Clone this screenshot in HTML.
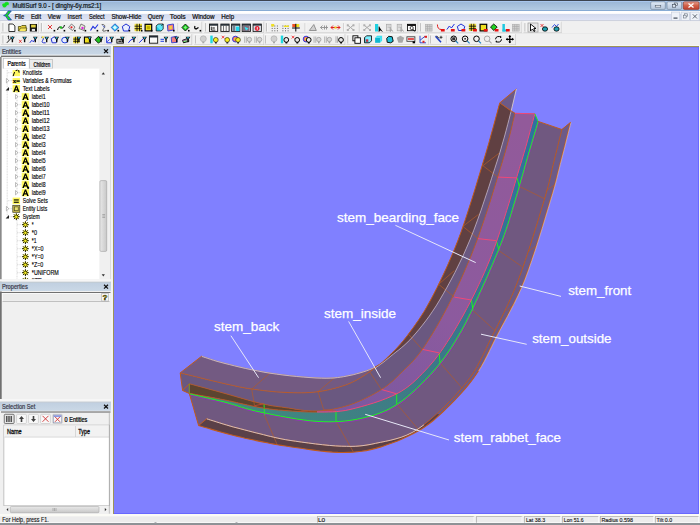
<!DOCTYPE html>
<html><head><meta charset="utf-8"><style>
html,body{margin:0;padding:0;}
body{width:700px;height:525px;overflow:hidden;position:relative;background:#f0f0f0;font-family:"Liberation Sans",sans-serif;}
svg{position:absolute;left:0;top:0;}
text{font-family:"Liberation Sans",sans-serif;}
</style></head><body>
<svg width="700" height="525" viewBox="0 0 700 525">
<rect x="0" y="0" width="700" height="525" fill="#f0f0f0"/>
<defs><linearGradient id="tg" x1="0" y1="0" x2="0" y2="1"><stop offset="0" stop-color="#96b3d3"/><stop offset="1" stop-color="#b6cde5"/></linearGradient><linearGradient id="mg" x1="0" y1="0" x2="0" y2="1"><stop offset="0" stop-color="#ffffff"/><stop offset="0.25" stop-color="#ffffff"/><stop offset="0.35" stop-color="#d4dbee"/><stop offset="1" stop-color="#e0e5f6"/></linearGradient><linearGradient id="hg" x1="0" y1="0" x2="0" y2="1"><stop offset="0" stop-color="#c0cfe0"/><stop offset="1" stop-color="#cad8e6"/></linearGradient><linearGradient id="cg" x1="0" y1="0" x2="0" y2="1"><stop offset="0" stop-color="#e8a090"/><stop offset="0.5" stop-color="#d06048"/><stop offset="1" stop-color="#c04030"/></linearGradient><linearGradient id="bg" x1="0" y1="0" x2="0" y2="1"><stop offset="0" stop-color="#e4ecf6"/><stop offset="0.5" stop-color="#c8d6e8"/><stop offset="1" stop-color="#b8c8dc"/></linearGradient><linearGradient id="sg" x1="0" y1="0" x2="1" y2="0"><stop offset="0" stop-color="#e8e8e8"/><stop offset="1" stop-color="#c8c8c8"/></linearGradient><linearGradient id="sgv" x1="0" y1="0" x2="0" y2="1"><stop offset="0" stop-color="#e8e8e8"/><stop offset="1" stop-color="#c8c8c8"/></linearGradient></defs>
<rect x="0" y="0" width="700" height="11" fill="url(#tg)" />
<rect x="0" y="0" width="700" height="1" fill="#3c4450" />
<rect x="0" y="1" width="700" height="1" fill="#a8c6ee" />
<rect x="0" y="10" width="700" height="1" fill="#88acd4" />
<path d="M2,4.5 Q2.5,2.8 4.5,3 Q5.5,1.2 7.5,1.8 Q9.5,2 9.2,4 Q9,5.8 7,5.6 Q6.5,7.8 4.2,7.8 Q2,7.6 2.5,6 Q1.6,5.4 2,4.5 Z" fill="#10e020" stroke="#e0b0e8" stroke-width="0.4"/>
<text x="12.6" y="8.2" font-size="6.6" fill="#101820" stroke="#101820" stroke-width="0.22" font-weight="normal" textLength="88.6" lengthAdjust="spacingAndGlyphs">MultiSurf 9.0 - [ dinghy-6y.ms2:1]</text>
<rect x="650.7" y="1.8" width="14.6" height="7.6" fill="url(#bg)" stroke="#6a7c94" stroke-width="0.6" rx="1.2"/>
<rect x="655.2" y="5.3" width="5.6" height="1.8" fill="#f0f4f8" stroke="#404a58" stroke-width="0.5" />
<rect x="667" y="1.8" width="14.6" height="7.6" fill="url(#bg)" stroke="#6a7c94" stroke-width="0.6" rx="1.2"/>
<rect x="674.2" y="3.0" width="3.4" height="2.6" fill="#dde6f0" stroke="#404a58" stroke-width="0.6" />
<rect x="672.3" y="4.6" width="3.4" height="2.6" fill="#dde6f0" stroke="#404a58" stroke-width="0.6" />
<rect x="683.3" y="1.8" width="15.8" height="7.6" fill="url(#cg)" stroke="#8a3020" stroke-width="0.6" rx="1.2"/>
<path d="M688.5,3.5 L693.5,7.5 M693.5,3.5 L688.5,7.5" stroke="#ffffff" stroke-width="1.3"/>
<rect x="0" y="11" width="700" height="9.5" fill="url(#mg)" />
<rect x="0" y="20.3" width="700" height="0.8" fill="#c4c8d4" />
<path d="M11.3,11 L7.8,15.4 L11.5,19.9 L8.2,20 L5.6,16.2 L3.6,15.5 L5.6,14.6 L8.2,10.9 Z" fill="#10e020" stroke="#2030c0" stroke-width="0.7"/>
<circle cx="7.2" cy="13.8" r="0.5" fill="#a040a0"/><circle cx="7.4" cy="17.2" r="0.5" fill="#a040a0"/>
<text x="14.700000000000001" y="18.6" font-size="6.5" fill="#101010" stroke="#101010" stroke-width="0.22" font-weight="normal" textLength="9.5" lengthAdjust="spacingAndGlyphs">File</text>
<text x="31.0" y="18.6" font-size="6.5" fill="#101010" stroke="#101010" stroke-width="0.22" font-weight="normal" textLength="10.0" lengthAdjust="spacingAndGlyphs">Edit</text>
<text x="47.699999999999996" y="18.6" font-size="6.5" fill="#101010" stroke="#101010" stroke-width="0.22" font-weight="normal" textLength="12.8" lengthAdjust="spacingAndGlyphs">View</text>
<text x="67.6" y="18.6" font-size="6.5" fill="#101010" stroke="#101010" stroke-width="0.22" font-weight="normal" textLength="14.200000000000001" lengthAdjust="spacingAndGlyphs">Insert</text>
<text x="88.89999999999999" y="18.6" font-size="6.5" fill="#101010" stroke="#101010" stroke-width="0.22" font-weight="normal" textLength="15.600000000000001" lengthAdjust="spacingAndGlyphs">Select</text>
<text x="111.39999999999999" y="18.6" font-size="6.5" fill="#101010" stroke="#101010" stroke-width="0.22" font-weight="normal" textLength="29.900000000000002" lengthAdjust="spacingAndGlyphs">Show-Hide</text>
<text x="147.8" y="18.6" font-size="6.5" fill="#101010" stroke="#101010" stroke-width="0.22" font-weight="normal" textLength="16.0" lengthAdjust="spacingAndGlyphs">Query</text>
<text x="169.8" y="18.6" font-size="6.5" fill="#101010" stroke="#101010" stroke-width="0.22" font-weight="normal" textLength="15.8" lengthAdjust="spacingAndGlyphs">Tools</text>
<text x="192.3" y="18.6" font-size="6.5" fill="#101010" stroke="#101010" stroke-width="0.22" font-weight="normal" textLength="22.3" lengthAdjust="spacingAndGlyphs">Window</text>
<text x="221.3" y="18.6" font-size="6.5" fill="#101010" stroke="#101010" stroke-width="0.22" font-weight="normal" textLength="12.8" lengthAdjust="spacingAndGlyphs">Help</text>
<rect x="671.3" y="12" width="8.5" height="8.6" fill="#eef2f8" stroke="#b8c0d0" stroke-width="0.5" />
<rect x="681.1" y="12" width="8.5" height="8.6" fill="#eef2f8" stroke="#b8c0d0" stroke-width="0.5" />
<rect x="690.6" y="12" width="8.5" height="8.6" fill="#eef2f8" stroke="#b8c0d0" stroke-width="0.5" />
<rect x="673.5" y="17.5" width="4" height="1.2" fill="#404a58" />
<rect x="684.6" y="13.8" width="2.8" height="2.8" fill="none" stroke="#6a7480" stroke-width="0.6" />
<rect x="683.3" y="15.2" width="2.8" height="2.8" fill="#eef2f8" stroke="#6a7480" stroke-width="0.6" />
<path d="M692.8,14.3 L697,18.5 M697,14.3 L692.8,18.5" stroke="#505a66" stroke-width="0.9"/>
<rect x="0" y="21.1" width="700" height="25.2" fill="#f0f0f0" />
<rect x="1" y="21.6" width="37.8" height="11.399999999999999" fill="#f0f0f0" /><line x1="1" y1="21.900000000000002" x2="38.8" y2="21.900000000000002" stroke="#ffffff" stroke-width="0.7" /><line x1="1" y1="32.7" x2="38.8" y2="32.7" stroke="#c8c8c8" stroke-width="0.7" /><line x1="38.5" y1="21.6" x2="38.5" y2="33.0" stroke="#c8c8c8" stroke-width="0.6" />
<rect x="40" y="21.6" width="162" height="11.399999999999999" fill="#f0f0f0" /><line x1="40" y1="21.900000000000002" x2="202" y2="21.900000000000002" stroke="#ffffff" stroke-width="0.7" /><line x1="40" y1="32.7" x2="202" y2="32.7" stroke="#c8c8c8" stroke-width="0.7" /><line x1="201.7" y1="21.6" x2="201.7" y2="33.0" stroke="#c8c8c8" stroke-width="0.6" />
<rect x="204.2" y="21.6" width="59.80000000000001" height="11.399999999999999" fill="#f0f0f0" /><line x1="204.2" y1="21.900000000000002" x2="264" y2="21.900000000000002" stroke="#ffffff" stroke-width="0.7" /><line x1="204.2" y1="32.7" x2="264" y2="32.7" stroke="#c8c8c8" stroke-width="0.7" /><line x1="263.7" y1="21.6" x2="263.7" y2="33.0" stroke="#c8c8c8" stroke-width="0.6" />
<rect x="265.5" y="21.6" width="152.5" height="11.399999999999999" fill="#f0f0f0" /><line x1="265.5" y1="21.900000000000002" x2="418" y2="21.900000000000002" stroke="#ffffff" stroke-width="0.7" /><line x1="265.5" y1="32.7" x2="418" y2="32.7" stroke="#c8c8c8" stroke-width="0.7" /><line x1="417.7" y1="21.6" x2="417.7" y2="33.0" stroke="#c8c8c8" stroke-width="0.6" />
<rect x="419.5" y="21.6" width="102.10000000000002" height="11.399999999999999" fill="#f0f0f0" /><line x1="419.5" y1="21.900000000000002" x2="521.6" y2="21.900000000000002" stroke="#ffffff" stroke-width="0.7" /><line x1="419.5" y1="32.7" x2="521.6" y2="32.7" stroke="#c8c8c8" stroke-width="0.7" /><line x1="521.3000000000001" y1="21.6" x2="521.3000000000001" y2="33.0" stroke="#c8c8c8" stroke-width="0.6" />
<rect x="523.5" y="21.6" width="38.10000000000002" height="11.399999999999999" fill="#f0f0f0" /><line x1="523.5" y1="21.900000000000002" x2="561.6" y2="21.900000000000002" stroke="#ffffff" stroke-width="0.7" /><line x1="523.5" y1="32.7" x2="561.6" y2="32.7" stroke="#c8c8c8" stroke-width="0.7" /><line x1="561.3000000000001" y1="21.6" x2="561.3000000000001" y2="33.0" stroke="#c8c8c8" stroke-width="0.6" />
<rect x="1" y="34.0" width="191" height="11.0" fill="#f0f0f0" /><line x1="1" y1="34.3" x2="192" y2="34.3" stroke="#ffffff" stroke-width="0.7" /><line x1="1" y1="44.7" x2="192" y2="44.7" stroke="#c8c8c8" stroke-width="0.7" /><line x1="191.7" y1="34.0" x2="191.7" y2="45.0" stroke="#c8c8c8" stroke-width="0.6" />
<rect x="194.2" y="34.0" width="69.80000000000001" height="11.0" fill="#f0f0f0" /><line x1="194.2" y1="34.3" x2="264" y2="34.3" stroke="#ffffff" stroke-width="0.7" /><line x1="194.2" y1="44.7" x2="264" y2="44.7" stroke="#c8c8c8" stroke-width="0.7" /><line x1="263.7" y1="34.0" x2="263.7" y2="45.0" stroke="#c8c8c8" stroke-width="0.6" />
<rect x="264.5" y="34.0" width="80.69999999999999" height="11.0" fill="#f0f0f0" /><line x1="264.5" y1="34.3" x2="345.2" y2="34.3" stroke="#ffffff" stroke-width="0.7" /><line x1="264.5" y1="44.7" x2="345.2" y2="44.7" stroke="#c8c8c8" stroke-width="0.7" /><line x1="344.9" y1="34.0" x2="344.9" y2="45.0" stroke="#c8c8c8" stroke-width="0.6" />
<rect x="346.5" y="34.0" width="82.30000000000001" height="11.0" fill="#f0f0f0" /><line x1="346.5" y1="34.3" x2="428.8" y2="34.3" stroke="#ffffff" stroke-width="0.7" /><line x1="346.5" y1="44.7" x2="428.8" y2="44.7" stroke="#c8c8c8" stroke-width="0.7" /><line x1="428.5" y1="34.0" x2="428.5" y2="45.0" stroke="#c8c8c8" stroke-width="0.6" />
<rect x="429.5" y="34.0" width="86.29999999999995" height="11.0" fill="#f0f0f0" /><line x1="429.5" y1="34.3" x2="515.8" y2="34.3" stroke="#ffffff" stroke-width="0.7" /><line x1="429.5" y1="44.7" x2="515.8" y2="44.7" stroke="#c8c8c8" stroke-width="0.7" /><line x1="515.5" y1="34.0" x2="515.5" y2="45.0" stroke="#c8c8c8" stroke-width="0.6" />
<line x1="0" y1="33.5" x2="700" y2="33.5" stroke="#e4e4e4" stroke-width="0.6" />
<rect x="0" y="45.2" width="700" height="1.2" fill="#f8f8f8" />
<line x1="3" y1="23.1" x2="3" y2="31.5" stroke="#b8b8b8" stroke-width="1"/><line x1="4" y1="23.1" x2="4" y2="31.5" stroke="#ffffff" stroke-width="0.6"/>
<line x1="41.4" y1="23.1" x2="41.4" y2="31.5" stroke="#b8b8b8" stroke-width="1"/><line x1="42.4" y1="23.1" x2="42.4" y2="31.5" stroke="#ffffff" stroke-width="0.6"/>
<line x1="205.7" y1="23.1" x2="205.7" y2="31.5" stroke="#b8b8b8" stroke-width="1"/><line x1="206.7" y1="23.1" x2="206.7" y2="31.5" stroke="#ffffff" stroke-width="0.6"/>
<line x1="266.4" y1="23.1" x2="266.4" y2="31.5" stroke="#b8b8b8" stroke-width="1"/><line x1="267.4" y1="23.1" x2="267.4" y2="31.5" stroke="#ffffff" stroke-width="0.6"/>
<line x1="420.7" y1="23.1" x2="420.7" y2="31.5" stroke="#b8b8b8" stroke-width="1"/><line x1="421.7" y1="23.1" x2="421.7" y2="31.5" stroke="#ffffff" stroke-width="0.6"/>
<line x1="525" y1="23.1" x2="525" y2="31.5" stroke="#b8b8b8" stroke-width="1"/><line x1="526" y1="23.1" x2="526" y2="31.5" stroke="#ffffff" stroke-width="0.6"/>
<line x1="3" y1="35.5" x2="3" y2="43.5" stroke="#b8b8b8" stroke-width="1"/><line x1="4" y1="35.5" x2="4" y2="43.5" stroke="#ffffff" stroke-width="0.6"/>
<line x1="195.7" y1="35.5" x2="195.7" y2="43.5" stroke="#b8b8b8" stroke-width="1"/><line x1="196.7" y1="35.5" x2="196.7" y2="43.5" stroke="#ffffff" stroke-width="0.6"/>
<line x1="265.7" y1="35.5" x2="265.7" y2="43.5" stroke="#b8b8b8" stroke-width="1"/><line x1="266.7" y1="35.5" x2="266.7" y2="43.5" stroke="#ffffff" stroke-width="0.6"/>
<line x1="347.9" y1="35.5" x2="347.9" y2="43.5" stroke="#b8b8b8" stroke-width="1"/><line x1="348.9" y1="35.5" x2="348.9" y2="43.5" stroke="#ffffff" stroke-width="0.6"/>
<line x1="430.7" y1="35.5" x2="430.7" y2="43.5" stroke="#b8b8b8" stroke-width="1"/><line x1="431.7" y1="35.5" x2="431.7" y2="43.5" stroke="#ffffff" stroke-width="0.6"/>
<line x1="177.9" y1="23.1" x2="177.9" y2="31.5" stroke="#c0c0c0" stroke-width="0.7"/><line x1="178.70000000000002" y1="23.1" x2="178.70000000000002" y2="31.5" stroke="#ffffff" stroke-width="0.5"/>
<line x1="305" y1="23.1" x2="305" y2="31.5" stroke="#c0c0c0" stroke-width="0.7"/><line x1="305.8" y1="23.1" x2="305.8" y2="31.5" stroke="#ffffff" stroke-width="0.5"/>
<line x1="343.6" y1="23.1" x2="343.6" y2="31.5" stroke="#c0c0c0" stroke-width="0.7"/><line x1="344.40000000000003" y1="23.1" x2="344.40000000000003" y2="31.5" stroke="#ffffff" stroke-width="0.5"/>
<line x1="359.3" y1="23.1" x2="359.3" y2="31.5" stroke="#c0c0c0" stroke-width="0.7"/><line x1="360.1" y1="23.1" x2="360.1" y2="31.5" stroke="#ffffff" stroke-width="0.5"/>
<line x1="446.4" y1="35.5" x2="446.4" y2="43.5" stroke="#c0c0c0" stroke-width="0.7"/><line x1="447.2" y1="35.5" x2="447.2" y2="43.5" stroke="#ffffff" stroke-width="0.5"/>
<path d="M8.9,24.0 L12.9,24.0 L14.9,26.0 L14.9,31.5 L8.9,31.5 Z" fill="#fff" stroke="#000" stroke-width="0.8"/>
<path d="M18.4,26.5 L20.9,26.5 L21.9,25.5 L25.9,25.5 L26.4,31.0 L18.4,31.0 Z" fill="#e8d040" stroke="#303000" stroke-width="0.7"/>
<path d="M18.9,31.0 L20.4,28.0 L26.9,28.0 L25.9,31.0" fill="#f8e860" stroke="#303000" stroke-width="0.6"/>
<rect x="29.8" y="24.0" width="7.2" height="7.5" fill="#101010" />
<rect x="31.1" y="24.7" width="4.6" height="2.8" fill="#e0d040" />
<rect x="31.8" y="28.9" width="3.2" height="2.2" fill="#e0e0e0" />
<path d="M48,25.0 L52,29.0 M52,25.0 L48,29.0" fill="none" stroke="#e02020" stroke-width="0.9"/>
<rect x="53.6" y="29.9" width="1.6" height="1.6" fill="#000" />
<path d="M57.5,30.0 Q59,25.5 61,27.5 T64.5,25.0" fill="none" stroke="#000" stroke-width="1.0"/>
<circle cx="61" cy="27.5" r="1.2" fill="#20c020"/>
<rect x="63.6" y="29.9" width="1.6" height="1.6" fill="#000" />
<path d="M71.5,24.0 L75.0,27.0 L72.5,30.5 L68.5,27.5 Z" fill="#f0f0f0" stroke="#505050" stroke-width="0.7"/>
<circle cx="71.5" cy="27.3" r="1.1" fill="#e02020"/>
<rect x="74.1" y="29.9" width="1.6" height="1.6" fill="#000" />
<path d="M81,24.0 L85,26.0 L84,30.5 L79,28.5 Z" fill="#e8e8d8" stroke="#505050" stroke-width="0.7"/>
<circle cx="82.5" cy="28.0" r="1.2" fill="#e020e0"/>
<rect x="84.6" y="29.9" width="1.6" height="1.6" fill="#000" />
<path d="M90.5,30.5 L93,26.5 L95,28.5 L98,24.5" fill="none" stroke="#2030e0" stroke-width="1.1"/>
<rect x="96.6" y="29.9" width="1.6" height="1.6" fill="#000" />
<path d="M101.7,24.5 Q106.7,24.5 103.7,28.5 T106.7,30.5" fill="none" stroke="#505050" stroke-width="0.9"/>
<path d="M102.7,25.5 L104.7,27.5" fill="none" stroke="#2040e0" stroke-width="0.8"/>
<rect x="107.3" y="29.9" width="1.6" height="1.6" fill="#000" />
<path d="M114.9,23.8 L118.9,27.5 L114.9,31.2 L111.2,27.5 Z" fill="#40d0f0" stroke="#2040c0" stroke-width="0.8"/>
<path d="M114.9,25.5 L116.9,27.5 L114.9,29.5 L112.9,27.5 Z" fill="#e0f8ff" stroke="none" stroke-width="1.0"/>
<rect x="117.5" y="29.9" width="1.6" height="1.6" fill="#000" />
<path d="M126,24.0 L129.8,26.5 L128.5,31.0 L123.5,31.0 L122.3,26.5 Z" fill="#e8eeff" stroke="#2030d0" stroke-width="1.0"/>
<rect x="128.6" y="29.9" width="1.6" height="1.6" fill="#000" />
<rect x="134.60000000000002" y="23.8" width="7.4" height="7.4" fill="#f0e040" />
<path d="M134.60000000000002,26.2 L142.0,26.2 M134.60000000000002,28.7 L142.0,28.7 M137.0,23.8 L137.0,31.2 M139.5,23.8 L139.5,31.2" fill="none" stroke="#000" stroke-width="0.8"/>
<rect x="140.9" y="29.9" width="1.6" height="1.6" fill="#000" />
<rect x="145.10000000000002" y="24.3" width="6.6" height="6.6" fill="#f0e020" stroke="#000" stroke-width="1.2" />
<rect x="146.9" y="26.1" width="3" height="3" fill="#c0b000" />
<rect x="150.9" y="29.9" width="1.6" height="1.6" fill="#000" />
<path d="M156.2,26.0 L161.2,26.0 L161.2,31.0 L156.2,31.0 Z" fill="#20c8e0" stroke="#000" stroke-width="0.7"/>
<path d="M156.2,26.0 L158.2,24.0 L163.2,24.0 L163.2,29.0 L161.2,31.0" fill="#60e8f8" stroke="#000" stroke-width="0.7"/>
<path d="M161.2,26.0 L163.2,24.0" fill="none" stroke="#000" stroke-width="0.6"/>
<path d="M167.4,25.0 L173.4,24.0 L173.9,30.0 L167.9,31.0 Z" fill="#f08080" stroke="#3040d0" stroke-width="0.9"/>
<rect x="169.4" y="26.0" width="2.5" height="3" fill="#f0d040" />
<rect x="173.0" y="29.9" width="1.6" height="1.6" fill="#000" />
<path d="M185.4,24.0 L188.9,27.5 L185.4,31.0 L181.9,27.5 Z" fill="#20d020" stroke="#000" stroke-width="0.8"/>
<path d="M185.4,26.0 L186.9,27.5 L185.4,29.0 L183.9,27.5 Z" fill="#90f090" stroke="none" stroke-width="1.0"/>
<rect x="188.0" y="29.9" width="1.6" height="1.6" fill="#000" />
<path d="M195,26.0 Q194,28.5 196,29.0 L198.5,27.5" fill="none" stroke="#000" stroke-width="1.2"/>
<rect x="199.6" y="29.9" width="1.6" height="1.6" fill="#000" />
<rect x="209.5" y="24.1" width="8.2" height="7.3" fill="#f8f8f8" stroke="#101010" stroke-width="0.9" />
<rect x="209.5" y="24.1" width="8.2" height="1.6" fill="#202830" />
<path d="M211.3,26.7 L211.3,30.1 L215.3,30.1" fill="none" stroke="#000" stroke-width="0.8"/>
<rect x="212.3" y="27.0" width="2.5" height="2" fill="#808080" />
<rect x="220.89999999999998" y="24.1" width="8.2" height="7.3" fill="#f8f8f8" stroke="#101010" stroke-width="0.9" />
<rect x="220.89999999999998" y="24.1" width="8.2" height="1.6" fill="#202830" />
<path d="M223.5,25.7 L223.5,31.3 M226.2,25.7 L226.2,31.3" fill="none" stroke="#404040" stroke-width="0.7"/>
<rect x="231.6" y="24.1" width="8.2" height="7.3" fill="#f8f8f8" stroke="#101010" stroke-width="0.9" />
<rect x="231.6" y="24.1" width="8.2" height="1.6" fill="#202830" />
<rect x="232.4" y="25.9" width="3" height="5.2" fill="#708090" />
<rect x="235.9" y="26.5" width="3.5" height="4.6" fill="#20d8f0" />
<rect x="242.2" y="24.1" width="8.2" height="7.3" fill="#f8f8f8" stroke="#101010" stroke-width="0.9" />
<rect x="242.2" y="24.1" width="8.2" height="1.6" fill="#202830" />
<rect x="243" y="25.9" width="6.6" height="5.2" fill="#807080" />
<path d="M244.5,26.7 L248.5,28.5 L246,30.5" fill="#30e8f8" stroke="none" stroke-width="1.0"/>
<rect x="253.1" y="24.1" width="8.2" height="7.3" fill="#f8f8f8" stroke="#101010" stroke-width="0.9" />
<rect x="253.1" y="24.1" width="8.2" height="1.6" fill="#202830" />
<rect x="253.9" y="25.9" width="6.6" height="5.2" fill="#d8dce8" />
<circle cx="257.2" cy="28.5" r="2.4" fill="#e02030"/>
<rect x="256.8" y="27.1" width="0.9" height="2.6" fill="#fff" />
<rect x="271.7" y="25.5" width="1" height="1" fill="#606060" />
<rect x="271.7" y="27.9" width="1" height="1" fill="#606060" />
<rect x="271.7" y="30.3" width="1" height="1" fill="#606060" />
<rect x="274.3" y="25.5" width="1" height="1" fill="#606060" />
<rect x="274.3" y="27.9" width="1" height="1" fill="#606060" />
<rect x="274.3" y="30.3" width="1" height="1" fill="#606060" />
<rect x="276.9" y="25.5" width="1" height="1" fill="#606060" />
<rect x="276.9" y="27.9" width="1" height="1" fill="#606060" />
<rect x="276.9" y="30.3" width="1" height="1" fill="#606060" />
<rect x="271.2" y="24.0" width="3" height="2.5" fill="#f0e020" />
<rect x="282.4" y="25.5" width="1" height="1" fill="#606060" />
<rect x="282.4" y="27.9" width="1" height="1" fill="#606060" />
<rect x="282.4" y="30.3" width="1" height="1" fill="#606060" />
<rect x="285.0" y="25.5" width="1" height="1" fill="#606060" />
<rect x="285.0" y="27.9" width="1" height="1" fill="#606060" />
<rect x="285.0" y="30.3" width="1" height="1" fill="#606060" />
<rect x="287.59999999999997" y="25.5" width="1" height="1" fill="#606060" />
<rect x="287.59999999999997" y="27.9" width="1" height="1" fill="#606060" />
<rect x="287.59999999999997" y="30.3" width="1" height="1" fill="#606060" />
<rect x="283.9" y="25.5" width="5" height="1.5" fill="#f0e020" />
<rect x="292.3" y="24.0" width="3.5" height="3" fill="#f05020" />
<rect x="295.8" y="24.0" width="3.5" height="3" fill="#f0e020" />
<path d="M292.1,28.0 L299.8,28.0 M295.8,23.8 L295.8,31.5" fill="none" stroke="#000" stroke-width="1.0"/>
<path d="M309.3,30.5 L313.8,24.5 L316.3,30.5 Z" fill="#d0d0d0" stroke="#808080" stroke-width="0.8"/>
<path d="M320.5,27.5 L328,27.5 M322.5,25.5 L320.5,27.5 L322.5,29.5 M324.5,25.5 L324.5,29.5 M326.5,25.5 L326.5,29.5" fill="none" stroke="#909090" stroke-width="0.9"/>
<path d="M331,27.5 L340,27.5" fill="none" stroke="#e02020" stroke-width="1.2"/>
<path d="M333,25.5 L331,27.5 L333,29.5 M338,25.5 L340,27.5 L338,29.5" fill="none" stroke="#e02020" stroke-width="0.9"/>
<rect x="334.5" y="26.5" width="2" height="2" fill="#f0e020" />
<path d="M347.5,25.0 L350.5,27.5 L353.5,25.0 M347.5,30.0 L350.5,27.5 L353.5,30.0" fill="none" stroke="#a8a8a8" stroke-width="1.0"/>
<rect x="346.8" y="24.3" width="2" height="2" fill="#b0b0b0" />
<rect x="352.5" y="24.3" width="2" height="2" fill="#b0b0b0" />
<rect x="346.8" y="29.0" width="2" height="2" fill="#b0b0b0" />
<rect x="352.5" y="29.0" width="2" height="2" fill="#b0b0b0" />
<path d="M364,25.0 L367,27.5 L370,25.0 M364,30.0 L367,27.5 L370,30.0" fill="none" stroke="#a8a8a8" stroke-width="1.0"/>
<rect x="363.3" y="24.3" width="2" height="2" fill="#b0b0b0" />
<rect x="369" y="24.3" width="2" height="2" fill="#b0b0b0" />
<rect x="363.3" y="29.0" width="2" height="2" fill="#b0b0b0" />
<rect x="369" y="29.0" width="2" height="2" fill="#b0b0b0" />
<rect x="375.0" y="24.0" width="3.2" height="7.5" fill="#20d0e0" />
<path d="M379.0,26.5 L379.0,31.5 L380.5,30.0 L382.5,31.5" fill="#000" stroke="#000" stroke-width="0.7"/>
<rect x="386.5" y="24.3" width="4.5" height="6.5" fill="#e0e0e0" stroke="#a8a8a8" stroke-width="0.7" />
<path d="M387.5,26.0 L390.0,26.0 M387.5,27.5 L390.0,27.5" fill="none" stroke="#b0b0b0" stroke-width="0.5"/>
<path d="M390.2,27.0 L390.2,31.5 L391.5,30.3 L393.2,31.5" fill="#c0c0c0" stroke="#909090" stroke-width="0.6"/>
<rect x="397.2" y="24.3" width="4.5" height="6.5" fill="#e0e0e0" stroke="#a8a8a8" stroke-width="0.7" />
<path d="M398.2,26.0 L400.7,26.0 M398.2,27.5 L400.7,27.5" fill="none" stroke="#b0b0b0" stroke-width="0.5"/>
<path d="M400.9,27.0 L400.9,31.5 L402.2,30.3 L403.9,31.5" fill="#c0c0c0" stroke="#909090" stroke-width="0.6"/>
<rect x="407.5" y="24.3" width="8" height="6.4" fill="#ffffff" stroke="#000" stroke-width="0.8" />
<rect x="407.5" y="24.3" width="8" height="1.6" fill="#000" />
<circle cx="411.7" cy="28.0" r="1.6" fill="none" stroke="#000" stroke-width="0.7"/>
<path d="M412.7,29.0 L414.7,31.5" fill="none" stroke="#000" stroke-width="0.9"/>
<rect x="425.3" y="24.3" width="6.8" height="6.8" fill="#d0d0d0" stroke="#b0b0b0" stroke-width="0.6" />
<path d="M425.3,26.5 L432.1,26.5 M425.3,28.8 L432.1,28.8 M427.5,24.3 L427.5,31.1 M429.8,24.3 L429.8,31.1" fill="none" stroke="#a8a8a8" stroke-width="0.6"/>
<path d="M437.4,24.5 Q437.4,29.5 441.4,29.5" fill="none" stroke="#e02020" stroke-width="1.0"/>
<rect x="440.9" y="29.0" width="3.8" height="2.5" fill="#e81010" />
<path d="M446.9,29.5 L449.4,26.0 L451.4,28.0 L454.4,24.0" fill="none" stroke="#2030e0" stroke-width="1.0"/>
<rect x="450.9" y="29.0" width="3.8" height="2.5" fill="#e81010" />
<path d="M461,24.0 L464.8,26.5 L463.5,30.5 L458.5,30.5 L457.3,26.5 Z" fill="#e8eeff" stroke="#2030d0" stroke-width="1.0"/>
<rect x="461.5" y="29.0" width="3.8" height="2.5" fill="#e81010" />
<rect x="468.90000000000003" y="23.8" width="7.2" height="7.2" fill="#f0e040" />
<path d="M468.90000000000003,26.2 L476.1,26.2 M468.90000000000003,28.7 L476.1,28.7 M471.3,23.8 L471.3,31.0 M473.8,23.8 L473.8,31.0" fill="none" stroke="#000" stroke-width="0.8"/>
<rect x="473.1" y="29.0" width="3.8" height="2.5" fill="#e81010" />
<rect x="480.1" y="24.3" width="6.6" height="6.6" fill="#f0e020" stroke="#000" stroke-width="1.2" />
<rect x="483.8" y="29.0" width="3.8" height="2.5" fill="#e81010" />
<path d="M493.7,24.0 L497.2,27.0 L493.7,30.5 L490.5,27.0 Z" fill="#20d020" stroke="#000" stroke-width="0.8"/>
<rect x="494.7" y="29.0" width="3.8" height="2.5" fill="#e81010" />
<rect x="502.4" y="24.0" width="2.5" height="7.5" fill="#20c8e0" />
<rect x="502.4" y="29.5" width="5" height="2" fill="#20c8e0" />
<rect x="505.9" y="29.0" width="3.8" height="2.5" fill="#e81010" />
<rect x="512.4" y="24.3" width="6.8" height="6.8" fill="#d0d0d0" stroke="#b0b0b0" stroke-width="0.6" />
<path d="M512.4,26.5 L519.2,26.5 M512.4,28.8 L519.2,28.8 M514.6,24.3 L514.6,31.1 M516.9,24.3 L516.9,31.1" fill="none" stroke="#a8a8a8" stroke-width="0.6"/>
<rect x="528" y="23.0" width="10" height="9" fill="#e8e8e8" stroke="#909090" stroke-width="0.6" />
<path d="M530.5,24.0 L530.5,31.0 L532.5,29.0 L534,31.5 L535,31.0 L533.8,28.5 L536,28.5 Z" fill="#fff" stroke="#000" stroke-width="0.9"/>
<path d="M540.5,24.0 L543.5,27.0 M543.5,24.0 L540.5,27.0" fill="none" stroke="#e02020" stroke-width="0.8"/>
<ellipse cx="545" cy="29.0" rx="2.6" ry="2.2" fill="#20a0b0" stroke="#000" stroke-width="0.8"/>
<path d="M552.0,27.5 L554.5,24.5 L556.5,26.5 L558.5,24.0" fill="none" stroke="#2040e0" stroke-width="0.9"/>
<ellipse cx="556.5" cy="29.0" rx="2.6" ry="2.2" fill="#20a0b0" stroke="#000" stroke-width="0.8"/>
<path d="M6.9,42.8 L12.9,36.3" fill="none" stroke="#000" stroke-width="0.9"/>
<path d="M7.6000000000000005,36.5 L8.600000000000001,35.9 L8.600000000000001,39.3" fill="none" stroke="#000" stroke-width="0.8"/>
<path d="M10.0,36.699999999999996 L14.8,36.699999999999996 L13.100000000000001,39.5 L13.100000000000001,42.3 L11.7,42.3 L11.7,39.5 Z" fill="#101010"/><path d="M11.2,37.3 L13.600000000000001,37.3 L12.4,39.0 Z" fill="#30d0f8"/>
<line x1="16.0" y1="35" x2="16.0" y2="44.3" stroke="#d8d8d8" stroke-width="0.5" />
<path d="M19.1,39.8 L21.6,42.8 M21.6,39.8 L19.1,42.8" fill="none" stroke="#e02020" stroke-width="0.8"/>
<path d="M22.200000000000003,36.699999999999996 L27.0,36.699999999999996 L25.3,39.5 L25.3,42.3 L23.900000000000002,42.3 L23.900000000000002,39.5 Z" fill="#101010"/><path d="M23.400000000000002,37.3 L25.8,37.3 L24.6,39.0 Z" fill="#30d0f8"/>
<line x1="28.200000000000003" y1="35" x2="28.200000000000003" y2="44.3" stroke="#d8d8d8" stroke-width="0.5" />
<path d="M29.8,42.8 L31.8,40.3 L33.3,41.8 L35.8,38.3" fill="none" stroke="#2030e0" stroke-width="1.0"/>
<path d="M32.9,36.699999999999996 L37.7,36.699999999999996 L36.0,39.5 L36.0,42.3 L34.6,42.3 L34.6,39.5 Z" fill="#101010"/><path d="M34.1,37.3 L36.5,37.3 L35.3,39.0 Z" fill="#30d0f8"/>
<line x1="38.9" y1="35" x2="38.9" y2="44.3" stroke="#d8d8d8" stroke-width="0.5" />
<path d="M41.2,37.3 Q44.7,37.3 42.7,40.3 T45.7,42.8" fill="none" stroke="#2030d0" stroke-width="1.0"/>
<rect x="41.7" y="36.3" width="2" height="2" fill="#f0e040" />
<path d="M44.300000000000004,36.699999999999996 L49.1,36.699999999999996 L47.400000000000006,39.5 L47.400000000000006,42.3 L46.0,42.3 L46.0,39.5 Z" fill="#101010"/><path d="M45.5,37.3 L47.900000000000006,37.3 L46.7,39.0 Z" fill="#30d0f8"/>
<line x1="50.300000000000004" y1="35" x2="50.300000000000004" y2="44.3" stroke="#d8d8d8" stroke-width="0.5" />
<path d="M54.2,36.8 L57.2,38.8 L56.2,42.8 L52.2,42.8 L51.2,38.8 Z" fill="#e8eeff" stroke="#2030d0" stroke-width="1.0"/>
<path d="M54.300000000000004,36.699999999999996 L59.1,36.699999999999996 L57.400000000000006,39.5 L57.400000000000006,42.3 L56.0,42.3 L56.0,39.5 Z" fill="#101010"/><path d="M55.5,37.3 L57.900000000000006,37.3 L56.7,39.0 Z" fill="#30d0f8"/>
<line x1="60.300000000000004" y1="35" x2="60.300000000000004" y2="44.3" stroke="#d8d8d8" stroke-width="0.5" />
<ellipse cx="64.9" cy="40.099999999999994" rx="3.2" ry="2.8" fill="#e8eeff" stroke="#2040e0" stroke-width="1.0"/>
<path d="M65.0,36.699999999999996 L69.8,36.699999999999996 L68.1,39.5 L68.1,42.3 L66.7,42.3 L66.7,39.5 Z" fill="#101010"/><path d="M66.2,37.3 L68.6,37.3 L67.4,39.0 Z" fill="#30d0f8"/>
<line x1="71.0" y1="35" x2="71.0" y2="44.3" stroke="#d8d8d8" stroke-width="0.5" />
<rect x="73.2" y="36.8" width="6.5" height="6.5" fill="#f0e040" />
<path d="M73.2,39.099999999999994 L79.7,39.099999999999994 M73.2,41.3 L79.7,41.3 M75.4,36.8 L75.4,43.3 M77.60000000000001,36.8 L77.60000000000001,43.3" fill="none" stroke="#000" stroke-width="0.8"/>
<path d="M76.5,36.699999999999996 L81.30000000000001,36.699999999999996 L79.60000000000001,39.5 L79.60000000000001,42.3 L78.2,42.3 L78.2,39.5 Z" fill="#101010"/><path d="M77.7,37.3 L80.10000000000001,37.3 L78.9,39.0 Z" fill="#30d0f8"/>
<line x1="82.5" y1="35" x2="82.5" y2="44.3" stroke="#d8d8d8" stroke-width="0.5" />
<rect x="84.39999999999999" y="37.099999999999994" width="6" height="6" fill="#f0e020" stroke="#000" stroke-width="1.1" />
<path d="M87.19999999999999,36.699999999999996 L92.0,36.699999999999996 L90.3,39.5 L90.3,42.3 L88.89999999999999,42.3 L88.89999999999999,39.5 Z" fill="#101010"/><path d="M88.39999999999999,37.3 L90.8,37.3 L89.6,39.0 Z" fill="#30d0f8"/>
<line x1="93.19999999999999" y1="35" x2="93.19999999999999" y2="44.3" stroke="#d8d8d8" stroke-width="0.5" />
<path d="M98.5,36.3 L102,39.8 L98.5,43.3 L95,39.8 Z" fill="#20c020" stroke="#000" stroke-width="0.8"/>
<path d="M98.6,36.699999999999996 L103.4,36.699999999999996 L101.7,39.5 L101.7,42.3 L100.3,42.3 L100.3,39.5 Z" fill="#101010"/><path d="M99.8,37.3 L102.2,37.3 L101.0,39.0 Z" fill="#30d0f8"/>
<line x1="104.6" y1="35" x2="104.6" y2="44.3" stroke="#d8d8d8" stroke-width="0.5" />
<path d="M106.7,36.8 L106.7,42.8 L111.7,42.8" fill="none" stroke="#2030e0" stroke-width="1.0"/>
<path d="M107.2,41.8 L109.7,39.3" fill="none" stroke="#2030e0" stroke-width="0.8"/>
<path d="M109.3,36.699999999999996 L114.10000000000001,36.699999999999996 L112.4,39.5 L112.4,42.3 L111.0,42.3 L111.0,39.5 Z" fill="#101010"/><path d="M110.5,37.3 L112.9,37.3 L111.7,39.0 Z" fill="#30d0f8"/>
<line x1="115.3" y1="35" x2="115.3" y2="44.3" stroke="#d8d8d8" stroke-width="0.5" />
<rect x="116.9" y="39.3" width="6.5" height="3.8" fill="#f0f0f0" stroke="#000" stroke-width="0.9" />
<rect x="118.4" y="40.5" width="3" height="1.6" fill="#303030" />
<path d="M120.0,36.699999999999996 L124.80000000000001,36.699999999999996 L123.10000000000001,39.5 L123.10000000000001,42.3 L121.7,42.3 L121.7,39.5 Z" fill="#101010"/><path d="M121.2,37.3 L123.60000000000001,37.3 L122.4,39.0 Z" fill="#30d0f8"/>
<line x1="126.0" y1="35" x2="126.0" y2="44.3" stroke="#d8d8d8" stroke-width="0.5" />
<path d="M128.4,42.8 L130.9,39.8 L132.9,39.3" fill="none" stroke="#2030e0" stroke-width="1.0"/>
<path d="M131.5,36.699999999999996 L136.3,36.699999999999996 L134.6,39.5 L134.6,42.3 L133.20000000000002,42.3 L133.20000000000002,39.5 Z" fill="#101010"/><path d="M132.70000000000002,37.3 L135.1,37.3 L133.9,39.0 Z" fill="#30d0f8"/>
<line x1="137.5" y1="35" x2="137.5" y2="44.3" stroke="#d8d8d8" stroke-width="0.5" />
<path d="M139.1,42.8 L143.6,38.3" fill="none" stroke="#2030e0" stroke-width="1.0"/>
<path d="M142.2,36.699999999999996 L147.0,36.699999999999996 L145.29999999999998,39.5 L145.29999999999998,42.3 L143.9,42.3 L143.9,39.5 Z" fill="#101010"/><path d="M143.4,37.3 L145.79999999999998,37.3 L144.6,39.0 Z" fill="#30d0f8"/>
<line x1="148.2" y1="35" x2="148.2" y2="44.3" stroke="#d8d8d8" stroke-width="0.5" />
<rect x="149.5" y="35.9" width="8.2" height="7.3" fill="#f8f8f8" stroke="#101010" stroke-width="0.9" />
<rect x="149.5" y="35.9" width="8.2" height="1.6" fill="#202830" />
<line x1="158.9" y1="35" x2="158.9" y2="44.3" stroke="#d8d8d8" stroke-width="0.5" />
<path d="M160.5,41.3 L164,41.3 M160.5,39.3 L164,39.3" fill="none" stroke="#2040e0" stroke-width="1.0"/>
<path d="M163.6,36.699999999999996 L168.4,36.699999999999996 L166.7,39.5 L166.7,42.3 L165.3,42.3 L165.3,39.5 Z" fill="#101010"/><path d="M164.8,37.3 L167.2,37.3 L166.0,39.0 Z" fill="#30d0f8"/>
<line x1="169.6" y1="35" x2="169.6" y2="44.3" stroke="#d8d8d8" stroke-width="0.5" />
<path d="M171.2,37.3 L176.7,36.3 L177.2,42.3 L171.7,42.8 Z" fill="#f08080" stroke="#3040d0" stroke-width="0.9"/>
<path d="M174.29999999999998,36.699999999999996 L179.1,36.699999999999996 L177.39999999999998,39.5 L177.39999999999998,42.3 L176.0,42.3 L176.0,39.5 Z" fill="#101010"/><path d="M175.5,37.3 L177.89999999999998,37.3 L176.7,39.0 Z" fill="#30d0f8"/>
<line x1="180.29999999999998" y1="35" x2="180.29999999999998" y2="44.3" stroke="#d8d8d8" stroke-width="0.5" />
<path d="M182.5,40.3 L188,38.3 L189,41.3 L183.5,42.8 Z" fill="#80f080" stroke="#000" stroke-width="0.9"/>
<path d="M182.5,40.3 L188.5,39.8" fill="none" stroke="#a020a0" stroke-width="0.7"/>
<path d="M185.6,36.699999999999996 L190.4,36.699999999999996 L188.7,39.5 L188.7,42.3 L187.3,42.3 L187.3,39.5 Z" fill="#101010"/><path d="M186.8,37.3 L189.2,37.3 L188.0,39.0 Z" fill="#30d0f8"/>
<line x1="191.6" y1="35" x2="191.6" y2="44.3" stroke="#d8d8d8" stroke-width="0.5" />
<circle cx="203.3" cy="38.8" r="3" fill="#d0d0d0" stroke="#a8a8a8" stroke-width="0.6"/>
<rect x="202.3" y="41.599999999999994" width="2" height="1.7" fill="#a8a8a8" />
<rect x="210.3" y="35.599999999999994" width="2.4" height="7.7" fill="#20d8e0" />
<circle cx="215.8" cy="39.9" r="2.4" fill="#f8f020" stroke="#303010" stroke-width="0.7"/>
<rect x="215" y="42.099999999999994" width="1.8" height="1.4" fill="#202020" />
<path d="M221.70000000000002,35.8 L224.4,38.5 M224.4,35.8 L221.70000000000002,38.5" fill="none" stroke="#f02020" stroke-width="0.8"/>
<circle cx="227.20000000000002" cy="39.9" r="2.4" fill="#f8f020" stroke="#303010" stroke-width="0.7"/>
<rect x="226.4" y="42.099999999999994" width="1.8" height="1.4" fill="#202020" />
<circle cx="235.39999999999998" cy="39.099999999999994" r="2.9" fill="#f07070" stroke="#3040e0" stroke-width="1.0"/>
<rect x="234.39999999999998" y="37.8" width="1.6" height="2.5" fill="#f0e040" />
<circle cx="238.0" cy="39.9" r="2.4" fill="#f8f020" stroke="#303010" stroke-width="0.7"/>
<rect x="237.2" y="42.099999999999994" width="1.8" height="1.4" fill="#202020" />
<rect x="244.1" y="36.5" width="1.1" height="6.3" fill="#b8b8b8" />
<rect x="245.79999999999998" y="36.5" width="1.1" height="6.3" fill="#b8b8b8" />
<circle cx="249.4" cy="39.5" r="2.2" fill="#d8d8d8" stroke="#a0a0a0" stroke-width="0.8"/>
<rect x="248.6" y="41.699999999999996" width="1.6" height="1.6" fill="#a0a0a0" />
<rect x="254.3" y="36.5" width="1.1" height="6.3" fill="#b8b8b8" />
<rect x="256.0" y="36.5" width="1.1" height="6.3" fill="#b8b8b8" />
<circle cx="259.6" cy="39.5" r="2.2" fill="#d8d8d8" stroke="#a0a0a0" stroke-width="0.8"/>
<rect x="258.8" y="41.699999999999996" width="1.6" height="1.6" fill="#a0a0a0" />
<circle cx="274" cy="38.8" r="3" fill="#d0d0d0" stroke="#a8a8a8" stroke-width="0.6"/>
<rect x="273" y="41.599999999999994" width="2" height="1.7" fill="#a8a8a8" />
<rect x="280.8" y="35.599999999999994" width="2.4" height="7.7" fill="#20d8e0" />
<circle cx="286.3" cy="39.9" r="2.4" fill="#e8e8e8" stroke="#000" stroke-width="1.0"/>
<rect x="285.5" y="42.099999999999994" width="1.8" height="1.4" fill="#000" />
<path d="M291.7,35.8 L294.4,38.5 M294.4,35.8 L291.7,38.5" fill="none" stroke="#f02020" stroke-width="0.8"/>
<circle cx="297.2" cy="39.9" r="2.4" fill="#e8e8e8" stroke="#000" stroke-width="1.0"/>
<rect x="296.4" y="42.099999999999994" width="1.8" height="1.4" fill="#000" />
<circle cx="306.09999999999997" cy="39.099999999999994" r="2.9" fill="#f07070" stroke="#3040e0" stroke-width="1.0"/>
<rect x="305.09999999999997" y="37.8" width="1.6" height="2.5" fill="#f0e040" />
<circle cx="308.7" cy="39.9" r="2.4" fill="#e8e8e8" stroke="#000" stroke-width="1.0"/>
<rect x="307.9" y="42.099999999999994" width="1.8" height="1.4" fill="#000" />
<rect x="313.5" y="36.5" width="1.1" height="6.3" fill="#b8b8b8" />
<rect x="315.2" y="36.5" width="1.1" height="6.3" fill="#b8b8b8" />
<circle cx="318.8" cy="39.5" r="2.2" fill="#d8d8d8" stroke="#a0a0a0" stroke-width="0.8"/>
<rect x="318" y="41.699999999999996" width="1.6" height="1.6" fill="#a0a0a0" />
<rect x="324.1" y="36.5" width="1.1" height="6.3" fill="#b8b8b8" />
<rect x="325.8" y="36.5" width="1.1" height="6.3" fill="#b8b8b8" />
<circle cx="329.40000000000003" cy="39.5" r="2.2" fill="#d8d8d8" stroke="#a0a0a0" stroke-width="0.8"/>
<rect x="328.6" y="41.699999999999996" width="1.6" height="1.6" fill="#a0a0a0" />
<rect x="335.5" y="36.3" width="1" height="6.5" fill="#b0b0b0" />
<rect x="337.0" y="36.3" width="1" height="6.5" fill="#b0b0b0" />
<circle cx="341.0" cy="39.9" r="2.4" fill="#e8e8e8" stroke="#000" stroke-width="1.0"/>
<rect x="340.2" y="42.099999999999994" width="1.8" height="1.4" fill="#000" />
<rect x="352.9" y="35.8" width="5" height="5" fill="#fff" stroke="#000" stroke-width="0.9" />
<rect x="354.9" y="37.8" width="5.5" height="5.5" fill="#fff" stroke="#000" stroke-width="0.9" />
<path d="M364.5,37.8 L369.5,37.8 L369.5,42.8 L364.5,42.8 Z" fill="#40d8f0" stroke="#000" stroke-width="0.8"/>
<path d="M364.5,37.8 L366.5,35.8 L371.5,35.8 L371.5,40.8 L369.5,42.8" fill="#80f0ff" stroke="#000" stroke-width="0.8"/>
<rect x="365.8" y="39.3" width="2.5" height="2.5" fill="#c03040" />
<path d="M375.1,37.8 L380.1,37.8 L380.1,42.8 L375.1,42.8 Z" fill="#10b8d0" stroke="none" stroke-width="1.0"/>
<path d="M375.1,37.8 L377.1,35.8 L382.1,35.8 L382.1,40.8 L380.1,42.8 L380.1,37.8 Z" fill="#40e0f0" stroke="none" stroke-width="1.0"/>
<path d="M386.7,38.3 L388.7,36.3 L392.2,36.8 L393.2,41.3 L390.7,42.8 L387.2,42.3 Z" fill="#20c0d8" stroke="#000" stroke-width="0.9"/>
<path d="M400.4,35.8 L404.2,37.8 L402.4,42.8 L398.4,42.8 L396.7,37.8 Z" fill="#a8a8a8" stroke="none" stroke-width="1.0"/>
<rect x="406.90000000000003" y="36.8" width="8" height="4.5" fill="#f0f0f0" stroke="#303030" stroke-width="0.8" />
<rect x="407.90000000000003" y="38.099999999999994" width="6" height="1.8" fill="#e04040" />
<rect x="412.6" y="41.3" width="2.5" height="2" fill="#000" />
<path d="M420,35.8 L420,42.8 L426,42.8 M420,40.3 L425,36.3" fill="none" stroke="#2040d0" stroke-width="0.9"/>
<rect x="424.5" y="35.8" width="2.5" height="2" fill="#e02020" />
<rect x="422.5" y="40.8" width="2" height="2" fill="#e02020" />
<path d="M435.5,36.3 L441,42.3" fill="none" stroke="#2040c0" stroke-width="1.6"/>
<path d="M436.5,35.8 L439,38.3" fill="none" stroke="#000" stroke-width="0.8"/>
<path d="M441,35.8 L441,38.8 M439.5,37.3 L442.5,37.3" fill="none" stroke="#000" stroke-width="0.7"/>
<circle cx="453.7" cy="38.8" r="2.8" fill="#f0f0f0" stroke="#000" stroke-width="1.0"/>
<path d="M455.7,40.8 L458.2,43.3" fill="none" stroke="#2080c0" stroke-width="1.2"/>
<rect x="452.2" y="37.3" width="3" height="3" fill="#303030" />
<circle cx="465.1" cy="38.8" r="2.8" fill="#f0f0f0" stroke="#000" stroke-width="1.0"/>
<path d="M467.1,40.8 L469.6,43.3" fill="none" stroke="#2080c0" stroke-width="1.2"/>
<rect x="464.40000000000003" y="38.099999999999994" width="1.4" height="1.4" fill="#000" />
<circle cx="476.5" cy="38.8" r="2.8" fill="#f0f0f0" stroke="#000" stroke-width="1.0"/>
<path d="M478.5,40.8 L481,43.3" fill="none" stroke="#2080c0" stroke-width="1.2"/>
<circle cx="487.1" cy="38.8" r="2.8" fill="#f0f0f0" stroke="#a8a8a8" stroke-width="1.0"/>
<path d="M489.1,40.8 L491.6,43.3" fill="none" stroke="#a8a8a8" stroke-width="1.2"/>
<path d="M495.5,39.3 A3,3 0 0 1 501.0,37.8 M501.5,39.3 A3,3 0 0 1 496.0,40.8" fill="none" stroke="#000" stroke-width="1.0"/>
<path d="M499.5,36.8 L501.5,37.8 L501.0,35.8 Z" fill="#000" stroke="none" stroke-width="1.0"/>
<path d="M497.5,41.8 L495.5,40.8 L496.0,42.8 Z" fill="#000" stroke="none" stroke-width="1.0"/>
<path d="M509.8,35.599999999999994 L509.8,43.0 M506.1,39.3 L513.5,39.3" fill="none" stroke="#000" stroke-width="1.3"/>
<path d="M508.3,37.099999999999994 L509.8,35.3 L511.3,37.099999999999994 Z M508.3,41.5 L509.8,43.3 L511.3,41.5 Z M507.6,37.8 L505.8,39.3 L507.6,40.8 Z M512.0,37.8 L513.8,39.3 L512.0,40.8 Z" fill="#000" stroke="none" stroke-width="1.0"/>
<!-- viewport -->
<rect x="111" y="46" width="589" height="468" fill="#f4f4f4"/>
<rect x="113" y="46" width="587" height="1" fill="#9c9458"/>
<rect x="113" y="46" width="1" height="468" fill="#9c9458"/>
<rect x="114" y="47" width="586" height="467" fill="#8080ff"/>
<rect x="114" y="513" width="586" height="1" fill="#6868ff"/>
<rect x="698" y="47" width="1" height="467" fill="#6a6aff"/>
<rect x="699" y="46" width="1" height="468" fill="#fbfbf2"/>
<rect x="114" y="47" width="584" height="1" fill="#7474f4"/>
<rect x="0" y="46.9" width="111" height="8.6" fill="url(#hg)" />
<rect x="0" y="46.3" width="111" height="0.6" fill="#a8b4bc" />
<text x="1.9" y="53.5" font-size="6.6" fill="#3a3a4a" stroke="#3a3a4a" stroke-width="0.22" font-weight="normal" textLength="19.3" lengthAdjust="spacingAndGlyphs">Entities</text>
<path d="M104,49.3 L108,53.1 M108,49.3 L104,53.1" stroke="#101010" stroke-width="1.2"/>
<rect x="0" y="54.6" width="111" height="1.2" fill="#f4f4f4" />
<rect x="1" y="55.7" width="109.5" height="1.2" fill="#545454" />
<rect x="0" y="56.9" width="111" height="11.7" fill="#f0f0f0" />
<rect x="0" y="56.9" width="1.6" height="225" fill="#8a8a8a" />
<rect x="29.4" y="59.6" width="23.2" height="9.2" fill="#ececec" stroke="#b0b0b0" stroke-width="0.6" />
<rect x="3.4" y="58.6" width="25.8" height="10.5" fill="#ffffff" stroke="#b0b4b8" stroke-width="0.6" />
<text x="7.5" y="65.8" font-size="6.6" fill="#000" stroke="#000" stroke-width="0.22" font-weight="normal" textLength="18" lengthAdjust="spacingAndGlyphs">Parents</text>
<text x="33.5" y="66.6" font-size="6.4" fill="#000" stroke="#000" stroke-width="0.22" font-weight="normal" textLength="16.8" lengthAdjust="spacingAndGlyphs">Children</text>
<rect x="2" y="68.6" width="97.6" height="210.6" fill="#ffffff" />
<g clip-path="url(#treeclip)">
<defs><clipPath id="treeclip"><rect x="2" y="68.6" width="97.6" height="210.6"/></clipPath></defs>
<line x1="7.2" y1="70" x2="7.2" y2="216" stroke="#c4c4c4" stroke-width="0.6" stroke-dasharray="1,0.6"/>
<line x1="17.0" y1="92" x2="17.0" y2="193" stroke="#c4c4c4" stroke-width="0.6" stroke-dasharray="1,0.6"/>
<line x1="17.0" y1="220" x2="17.0" y2="279" stroke="#c4c4c4" stroke-width="0.6" stroke-dasharray="1,0.6"/>
<line x1="7.9" y1="72.7" x2="12.4" y2="72.7" stroke="#c4c4c4" stroke-width="0.6" stroke-dasharray="1,0.6"/>
<rect x="12.6" y="70.10000000000001" width="7.4" height="6" fill="#fff860" />
<path d="M13.1,76.10000000000001 L14.6,72.10000000000001 M15.6,70.60000000000001 L17.6,70.10000000000001 M18.6,70.10000000000001 L19.1,72.60000000000001" stroke="#000" stroke-width="1"/>
<text x="22.7" y="75.0" font-size="6.4" fill="#000" stroke="#000" stroke-width="0.14" font-weight="normal" textLength="19.4" lengthAdjust="spacingAndGlyphs">Knotlists</text>
<line x1="7.9" y1="80.7" x2="12.4" y2="80.7" stroke="#c4c4c4" stroke-width="0.6" stroke-dasharray="1,0.6"/>
<path d="M6.4,78.5 L8.8,80.7 L6.4,82.9 Z" fill="#fff" stroke="#909090" stroke-width="0.6"/>
<rect x="12.6" y="78.10000000000001" width="7.4" height="5.8" fill="#fff860" />
<text x="12.799999999999999" y="82.9" font-size="6" fill="#000" stroke="#000" stroke-width="0.22" font-weight="bold" textLength="7" lengthAdjust="spacingAndGlyphs">x=</text>
<text x="22.7" y="83.0" font-size="6.4" fill="#000" stroke="#000" stroke-width="0.14" font-weight="normal" textLength="49" lengthAdjust="spacingAndGlyphs">Variables &amp; Formulas</text>
<line x1="7.9" y1="88.7" x2="12.4" y2="88.7" stroke="#c4c4c4" stroke-width="0.6" stroke-dasharray="1,0.6"/>
<path d="M9.0,86.9 L9.0,90.5 L5.6000000000000005,90.5 Z" fill="#202020"/>
<rect x="12.6" y="85.10000000000001" width="7.4" height="7.2" fill="#fff860" />
<path d="M13.2,92.10000000000001 L15.8,85.50000000000001 L17.0,85.50000000000001 L19.6,92.10000000000001 L18.0,92.10000000000001 L17.5,90.60000000000001 L15.2,90.60000000000001 L14.7,92.10000000000001 Z M15.6,89.30000000000001 L17.1,89.30000000000001 L16.35,87.30000000000001 Z" fill="#000" fill-rule="evenodd"/>
<text x="22.7" y="91.0" font-size="6.4" fill="#000" stroke="#000" stroke-width="0.14" font-weight="normal" textLength="26.9" lengthAdjust="spacingAndGlyphs">Text Labels</text>
<line x1="17.0" y1="96.7" x2="21.5" y2="96.7" stroke="#c4c4c4" stroke-width="0.6" stroke-dasharray="1,0.6"/>
<path d="M15.5,94.5 L17.9,96.7 L15.5,98.9 Z" fill="#fff" stroke="#909090" stroke-width="0.6"/>
<rect x="21.7" y="93.10000000000001" width="7.4" height="7.2" fill="#fff860" />
<path d="M22.3,100.10000000000001 L24.9,93.50000000000001 L26.1,93.50000000000001 L28.7,100.10000000000001 L27.1,100.10000000000001 L26.6,98.60000000000001 L24.3,98.60000000000001 L23.8,100.10000000000001 Z M24.7,97.30000000000001 L26.2,97.30000000000001 L25.45,95.30000000000001 Z" fill="#000" fill-rule="evenodd"/>
<text x="31.8" y="99.0" font-size="6.4" fill="#000" stroke="#000" stroke-width="0.14" font-weight="normal" textLength="13.7" lengthAdjust="spacingAndGlyphs">label1</text>
<line x1="17.0" y1="104.7" x2="21.5" y2="104.7" stroke="#c4c4c4" stroke-width="0.6" stroke-dasharray="1,0.6"/>
<path d="M15.5,102.5 L17.9,104.7 L15.5,106.9 Z" fill="#fff" stroke="#909090" stroke-width="0.6"/>
<rect x="21.7" y="101.10000000000001" width="7.4" height="7.2" fill="#fff860" />
<path d="M22.3,108.10000000000001 L24.9,101.50000000000001 L26.1,101.50000000000001 L28.7,108.10000000000001 L27.1,108.10000000000001 L26.6,106.60000000000001 L24.3,106.60000000000001 L23.8,108.10000000000001 Z M24.7,105.30000000000001 L26.2,105.30000000000001 L25.45,103.30000000000001 Z" fill="#000" fill-rule="evenodd"/>
<rect x="27.299999999999997" y="106.7" width="1.8" height="2.2" fill="#000" />
<text x="31.8" y="107.0" font-size="6.4" fill="#000" stroke="#000" stroke-width="0.14" font-weight="normal" textLength="17.8" lengthAdjust="spacingAndGlyphs">label10</text>
<line x1="17.0" y1="112.7" x2="21.5" y2="112.7" stroke="#c4c4c4" stroke-width="0.6" stroke-dasharray="1,0.6"/>
<path d="M15.5,110.5 L17.9,112.7 L15.5,114.9 Z" fill="#fff" stroke="#909090" stroke-width="0.6"/>
<rect x="21.7" y="109.10000000000001" width="7.4" height="7.2" fill="#fff860" />
<path d="M22.3,116.10000000000001 L24.9,109.50000000000001 L26.1,109.50000000000001 L28.7,116.10000000000001 L27.1,116.10000000000001 L26.6,114.60000000000001 L24.3,114.60000000000001 L23.8,116.10000000000001 Z M24.7,113.30000000000001 L26.2,113.30000000000001 L25.45,111.30000000000001 Z" fill="#000" fill-rule="evenodd"/>
<rect x="27.299999999999997" y="114.7" width="1.8" height="2.2" fill="#000" />
<text x="31.8" y="115.0" font-size="6.4" fill="#000" stroke="#000" stroke-width="0.14" font-weight="normal" textLength="17.8" lengthAdjust="spacingAndGlyphs">label11</text>
<line x1="17.0" y1="120.7" x2="21.5" y2="120.7" stroke="#c4c4c4" stroke-width="0.6" stroke-dasharray="1,0.6"/>
<path d="M15.5,118.5 L17.9,120.7 L15.5,122.9 Z" fill="#fff" stroke="#909090" stroke-width="0.6"/>
<rect x="21.7" y="117.10000000000001" width="7.4" height="7.2" fill="#fff860" />
<path d="M22.3,124.10000000000001 L24.9,117.50000000000001 L26.1,117.50000000000001 L28.7,124.10000000000001 L27.1,124.10000000000001 L26.6,122.60000000000001 L24.3,122.60000000000001 L23.8,124.10000000000001 Z M24.7,121.30000000000001 L26.2,121.30000000000001 L25.45,119.30000000000001 Z" fill="#000" fill-rule="evenodd"/>
<text x="31.8" y="123.0" font-size="6.4" fill="#000" stroke="#000" stroke-width="0.14" font-weight="normal" textLength="17.8" lengthAdjust="spacingAndGlyphs">label12</text>
<line x1="17.0" y1="128.7" x2="21.5" y2="128.7" stroke="#c4c4c4" stroke-width="0.6" stroke-dasharray="1,0.6"/>
<path d="M15.5,126.49999999999999 L17.9,128.7 L15.5,130.89999999999998 Z" fill="#fff" stroke="#909090" stroke-width="0.6"/>
<rect x="21.7" y="125.1" width="7.4" height="7.2" fill="#fff860" />
<path d="M22.3,132.1 L24.9,125.5 L26.1,125.5 L28.7,132.1 L27.1,132.1 L26.6,130.6 L24.3,130.6 L23.8,132.1 Z M24.7,129.29999999999998 L26.2,129.29999999999998 L25.45,127.3 Z" fill="#000" fill-rule="evenodd"/>
<text x="31.8" y="131.0" font-size="6.4" fill="#000" stroke="#000" stroke-width="0.14" font-weight="normal" textLength="17.8" lengthAdjust="spacingAndGlyphs">label13</text>
<line x1="17.0" y1="136.7" x2="21.5" y2="136.7" stroke="#c4c4c4" stroke-width="0.6" stroke-dasharray="1,0.6"/>
<path d="M15.5,134.5 L17.9,136.7 L15.5,138.89999999999998 Z" fill="#fff" stroke="#909090" stroke-width="0.6"/>
<rect x="21.7" y="133.1" width="7.4" height="7.2" fill="#fff860" />
<path d="M22.3,140.1 L24.9,133.5 L26.1,133.5 L28.7,140.1 L27.1,140.1 L26.6,138.6 L24.3,138.6 L23.8,140.1 Z M24.7,137.29999999999998 L26.2,137.29999999999998 L25.45,135.29999999999998 Z" fill="#000" fill-rule="evenodd"/>
<rect x="27.299999999999997" y="138.7" width="1.8" height="2.2" fill="#000" />
<text x="31.8" y="139.0" font-size="6.4" fill="#000" stroke="#000" stroke-width="0.14" font-weight="normal" textLength="13.7" lengthAdjust="spacingAndGlyphs">label2</text>
<line x1="17.0" y1="144.7" x2="21.5" y2="144.7" stroke="#c4c4c4" stroke-width="0.6" stroke-dasharray="1,0.6"/>
<path d="M15.5,142.5 L17.9,144.7 L15.5,146.89999999999998 Z" fill="#fff" stroke="#909090" stroke-width="0.6"/>
<rect x="21.7" y="141.1" width="7.4" height="7.2" fill="#fff860" />
<path d="M22.3,148.1 L24.9,141.5 L26.1,141.5 L28.7,148.1 L27.1,148.1 L26.6,146.6 L24.3,146.6 L23.8,148.1 Z M24.7,145.29999999999998 L26.2,145.29999999999998 L25.45,143.29999999999998 Z" fill="#000" fill-rule="evenodd"/>
<rect x="27.299999999999997" y="146.7" width="1.8" height="2.2" fill="#000" />
<text x="31.8" y="147.0" font-size="6.4" fill="#000" stroke="#000" stroke-width="0.14" font-weight="normal" textLength="13.7" lengthAdjust="spacingAndGlyphs">label3</text>
<line x1="17.0" y1="152.7" x2="21.5" y2="152.7" stroke="#c4c4c4" stroke-width="0.6" stroke-dasharray="1,0.6"/>
<path d="M15.5,150.5 L17.9,152.7 L15.5,154.89999999999998 Z" fill="#fff" stroke="#909090" stroke-width="0.6"/>
<rect x="21.7" y="149.1" width="7.4" height="7.2" fill="#fff860" />
<path d="M22.3,156.1 L24.9,149.5 L26.1,149.5 L28.7,156.1 L27.1,156.1 L26.6,154.6 L24.3,154.6 L23.8,156.1 Z M24.7,153.29999999999998 L26.2,153.29999999999998 L25.45,151.29999999999998 Z" fill="#000" fill-rule="evenodd"/>
<text x="31.8" y="155.0" font-size="6.4" fill="#000" stroke="#000" stroke-width="0.14" font-weight="normal" textLength="13.7" lengthAdjust="spacingAndGlyphs">label4</text>
<line x1="17.0" y1="160.7" x2="21.5" y2="160.7" stroke="#c4c4c4" stroke-width="0.6" stroke-dasharray="1,0.6"/>
<path d="M15.5,158.5 L17.9,160.7 L15.5,162.89999999999998 Z" fill="#fff" stroke="#909090" stroke-width="0.6"/>
<rect x="21.7" y="157.1" width="7.4" height="7.2" fill="#fff860" />
<path d="M22.3,164.1 L24.9,157.5 L26.1,157.5 L28.7,164.1 L27.1,164.1 L26.6,162.6 L24.3,162.6 L23.8,164.1 Z M24.7,161.29999999999998 L26.2,161.29999999999998 L25.45,159.29999999999998 Z" fill="#000" fill-rule="evenodd"/>
<rect x="27.299999999999997" y="162.7" width="1.8" height="2.2" fill="#000" />
<text x="31.8" y="163.0" font-size="6.4" fill="#000" stroke="#000" stroke-width="0.14" font-weight="normal" textLength="13.7" lengthAdjust="spacingAndGlyphs">label5</text>
<line x1="17.0" y1="168.7" x2="21.5" y2="168.7" stroke="#c4c4c4" stroke-width="0.6" stroke-dasharray="1,0.6"/>
<path d="M15.5,166.5 L17.9,168.7 L15.5,170.89999999999998 Z" fill="#fff" stroke="#909090" stroke-width="0.6"/>
<rect x="21.7" y="165.1" width="7.4" height="7.2" fill="#fff860" />
<path d="M22.3,172.1 L24.9,165.5 L26.1,165.5 L28.7,172.1 L27.1,172.1 L26.6,170.6 L24.3,170.6 L23.8,172.1 Z M24.7,169.29999999999998 L26.2,169.29999999999998 L25.45,167.29999999999998 Z" fill="#000" fill-rule="evenodd"/>
<rect x="27.299999999999997" y="170.7" width="1.8" height="2.2" fill="#000" />
<text x="31.8" y="171.0" font-size="6.4" fill="#000" stroke="#000" stroke-width="0.14" font-weight="normal" textLength="13.7" lengthAdjust="spacingAndGlyphs">label6</text>
<line x1="17.0" y1="176.7" x2="21.5" y2="176.7" stroke="#c4c4c4" stroke-width="0.6" stroke-dasharray="1,0.6"/>
<path d="M15.5,174.5 L17.9,176.7 L15.5,178.89999999999998 Z" fill="#fff" stroke="#909090" stroke-width="0.6"/>
<rect x="21.7" y="173.1" width="7.4" height="7.2" fill="#fff860" />
<path d="M22.3,180.1 L24.9,173.5 L26.1,173.5 L28.7,180.1 L27.1,180.1 L26.6,178.6 L24.3,178.6 L23.8,180.1 Z M24.7,177.29999999999998 L26.2,177.29999999999998 L25.45,175.29999999999998 Z" fill="#000" fill-rule="evenodd"/>
<text x="31.8" y="179.0" font-size="6.4" fill="#000" stroke="#000" stroke-width="0.14" font-weight="normal" textLength="13.7" lengthAdjust="spacingAndGlyphs">label7</text>
<line x1="17.0" y1="184.7" x2="21.5" y2="184.7" stroke="#c4c4c4" stroke-width="0.6" stroke-dasharray="1,0.6"/>
<path d="M15.5,182.5 L17.9,184.7 L15.5,186.89999999999998 Z" fill="#fff" stroke="#909090" stroke-width="0.6"/>
<rect x="21.7" y="181.1" width="7.4" height="7.2" fill="#fff860" />
<path d="M22.3,188.1 L24.9,181.5 L26.1,181.5 L28.7,188.1 L27.1,188.1 L26.6,186.6 L24.3,186.6 L23.8,188.1 Z M24.7,185.29999999999998 L26.2,185.29999999999998 L25.45,183.29999999999998 Z" fill="#000" fill-rule="evenodd"/>
<rect x="27.299999999999997" y="186.7" width="1.8" height="2.2" fill="#000" />
<text x="31.8" y="187.0" font-size="6.4" fill="#000" stroke="#000" stroke-width="0.14" font-weight="normal" textLength="13.7" lengthAdjust="spacingAndGlyphs">label8</text>
<line x1="17.0" y1="192.7" x2="21.5" y2="192.7" stroke="#c4c4c4" stroke-width="0.6" stroke-dasharray="1,0.6"/>
<path d="M15.5,190.5 L17.9,192.7 L15.5,194.89999999999998 Z" fill="#fff" stroke="#909090" stroke-width="0.6"/>
<rect x="21.7" y="189.1" width="7.4" height="7.2" fill="#fff860" />
<path d="M22.3,196.1 L24.9,189.5 L26.1,189.5 L28.7,196.1 L27.1,196.1 L26.6,194.6 L24.3,194.6 L23.8,196.1 Z M24.7,193.29999999999998 L26.2,193.29999999999998 L25.45,191.29999999999998 Z" fill="#000" fill-rule="evenodd"/>
<text x="31.8" y="195.0" font-size="6.4" fill="#000" stroke="#000" stroke-width="0.14" font-weight="normal" textLength="13.7" lengthAdjust="spacingAndGlyphs">label9</text>
<line x1="7.9" y1="200.7" x2="12.4" y2="200.7" stroke="#c4c4c4" stroke-width="0.6" stroke-dasharray="1,0.6"/>
<rect x="12.6" y="197.6" width="7.4" height="6.5" fill="#fff860" />
<rect x="13.799999999999999" y="199.4" width="5" height="1.1" fill="#000" />
<rect x="13.799999999999999" y="201.7" width="5" height="1.1" fill="#000" />
<text x="22.7" y="203.0" font-size="6.4" fill="#000" stroke="#000" stroke-width="0.14" font-weight="normal" textLength="25.1" lengthAdjust="spacingAndGlyphs">Solve Sets</text>
<line x1="7.9" y1="208.7" x2="12.4" y2="208.7" stroke="#c4c4c4" stroke-width="0.6" stroke-dasharray="1,0.6"/>
<path d="M6.4,206.5 L8.8,208.7 L6.4,210.89999999999998 Z" fill="#fff" stroke="#909090" stroke-width="0.6"/>
<rect x="12.799999999999999" y="205.29999999999998" width="7" height="7" fill="#c8b850" stroke="#404020" stroke-width="0.7" />
<rect x="14.4" y="206.9" width="3.8" height="3.8" fill="#e8e070" stroke="#404020" stroke-width="0.6" />
<text x="22.7" y="211.0" font-size="6.4" fill="#000" stroke="#000" stroke-width="0.14" font-weight="normal" textLength="24.5" lengthAdjust="spacingAndGlyphs">Entity Lists</text>
<line x1="7.9" y1="216.7" x2="12.4" y2="216.7" stroke="#c4c4c4" stroke-width="0.6" stroke-dasharray="1,0.6"/>
<path d="M9.0,214.89999999999998 L9.0,218.5 L5.6000000000000005,218.5 Z" fill="#202020"/>
<polygon points="19.90,216.70 18.15,217.47 18.85,219.25 17.07,218.55 16.30,220.30 15.53,218.55 13.75,219.25 14.45,217.47 12.70,216.70 14.45,215.93 13.75,214.15 15.53,214.85 16.30,213.10 17.07,214.85 18.85,214.15 18.15,215.93" fill="#f8f020"/>
<path d="M16.3,213.29999999999998 L16.3,220.1 M12.9,216.7 L19.7,216.7 M13.9,214.29999999999998 L18.7,219.1 M18.7,214.29999999999998 L13.9,219.1" stroke="#000" stroke-width="0.9"/>
<circle cx="16.3" cy="216.7" r="1.3" fill="#f8f020"/>
<text x="22.7" y="219.0" font-size="6.4" fill="#000" stroke="#000" stroke-width="0.14" font-weight="normal" textLength="17.1" lengthAdjust="spacingAndGlyphs">System</text>
<line x1="17.0" y1="224.7" x2="21.5" y2="224.7" stroke="#c4c4c4" stroke-width="0.6" stroke-dasharray="1,0.6"/>
<polygon points="29.00,224.70 27.25,225.47 27.95,227.25 26.17,226.55 25.40,228.30 24.63,226.55 22.85,227.25 23.55,225.47 21.80,224.70 23.55,223.93 22.85,222.15 24.63,222.85 25.40,221.10 26.17,222.85 27.95,222.15 27.25,223.93" fill="#f8f020"/>
<path d="M25.4,221.29999999999998 L25.4,228.1 M22.0,224.7 L28.799999999999997,224.7 M23.0,222.29999999999998 L27.799999999999997,227.1 M27.799999999999997,222.29999999999998 L23.0,227.1" stroke="#000" stroke-width="0.9"/>
<circle cx="25.4" cy="224.7" r="1.3" fill="#f8f020"/>
<text x="31.8" y="227.0" font-size="6.4" fill="#000" stroke="#000" stroke-width="0.14" font-weight="normal" textLength="1.8" lengthAdjust="spacingAndGlyphs">*</text>
<line x1="17.0" y1="232.7" x2="21.5" y2="232.7" stroke="#c4c4c4" stroke-width="0.6" stroke-dasharray="1,0.6"/>
<polygon points="29.00,232.70 27.25,233.47 27.95,235.25 26.17,234.55 25.40,236.30 24.63,234.55 22.85,235.25 23.55,233.47 21.80,232.70 23.55,231.93 22.85,230.15 24.63,230.85 25.40,229.10 26.17,230.85 27.95,230.15 27.25,231.93" fill="#f8f020"/>
<path d="M25.4,229.29999999999998 L25.4,236.1 M22.0,232.7 L28.799999999999997,232.7 M23.0,230.29999999999998 L27.799999999999997,235.1 M27.799999999999997,230.29999999999998 L23.0,235.1" stroke="#000" stroke-width="0.9"/>
<circle cx="25.4" cy="232.7" r="1.3" fill="#f8f020"/>
<text x="31.8" y="235.0" font-size="6.4" fill="#000" stroke="#000" stroke-width="0.14" font-weight="normal" textLength="5.2" lengthAdjust="spacingAndGlyphs">*0</text>
<line x1="17.0" y1="240.7" x2="21.5" y2="240.7" stroke="#c4c4c4" stroke-width="0.6" stroke-dasharray="1,0.6"/>
<polygon points="29.00,240.70 27.25,241.47 27.95,243.25 26.17,242.55 25.40,244.30 24.63,242.55 22.85,243.25 23.55,241.47 21.80,240.70 23.55,239.93 22.85,238.15 24.63,238.85 25.40,237.10 26.17,238.85 27.95,238.15 27.25,239.93" fill="#f8f020"/>
<path d="M25.4,237.29999999999998 L25.4,244.1 M22.0,240.7 L28.799999999999997,240.7 M23.0,238.29999999999998 L27.799999999999997,243.1 M27.799999999999997,238.29999999999998 L23.0,243.1" stroke="#000" stroke-width="0.9"/>
<circle cx="25.4" cy="240.7" r="1.3" fill="#f8f020"/>
<text x="31.8" y="243.0" font-size="6.4" fill="#000" stroke="#000" stroke-width="0.14" font-weight="normal" textLength="4.6" lengthAdjust="spacingAndGlyphs">*1</text>
<line x1="17.0" y1="248.7" x2="21.5" y2="248.7" stroke="#c4c4c4" stroke-width="0.6" stroke-dasharray="1,0.6"/>
<polygon points="29.00,248.70 27.25,249.47 27.95,251.25 26.17,250.55 25.40,252.30 24.63,250.55 22.85,251.25 23.55,249.47 21.80,248.70 23.55,247.93 22.85,246.15 24.63,246.85 25.40,245.10 26.17,246.85 27.95,246.15 27.25,247.93" fill="#f8f020"/>
<path d="M25.4,245.29999999999998 L25.4,252.1 M22.0,248.7 L28.799999999999997,248.7 M23.0,246.29999999999998 L27.799999999999997,251.1 M27.799999999999997,246.29999999999998 L23.0,251.1" stroke="#000" stroke-width="0.9"/>
<circle cx="25.4" cy="248.7" r="1.3" fill="#f8f020"/>
<text x="31.8" y="251.0" font-size="6.4" fill="#000" stroke="#000" stroke-width="0.14" font-weight="normal" textLength="11.8" lengthAdjust="spacingAndGlyphs">*X=0</text>
<line x1="17.0" y1="256.7" x2="21.5" y2="256.7" stroke="#c4c4c4" stroke-width="0.6" stroke-dasharray="1,0.6"/>
<polygon points="29.00,256.70 27.25,257.47 27.95,259.25 26.17,258.55 25.40,260.30 24.63,258.55 22.85,259.25 23.55,257.47 21.80,256.70 23.55,255.93 22.85,254.15 24.63,254.85 25.40,253.10 26.17,254.85 27.95,254.15 27.25,255.93" fill="#f8f020"/>
<path d="M25.4,253.29999999999998 L25.4,260.09999999999997 M22.0,256.7 L28.799999999999997,256.7 M23.0,254.29999999999998 L27.799999999999997,259.09999999999997 M27.799999999999997,254.29999999999998 L23.0,259.09999999999997" stroke="#000" stroke-width="0.9"/>
<circle cx="25.4" cy="256.7" r="1.3" fill="#f8f020"/>
<text x="31.8" y="259.0" font-size="6.4" fill="#000" stroke="#000" stroke-width="0.14" font-weight="normal" textLength="11.8" lengthAdjust="spacingAndGlyphs">*Y=0</text>
<line x1="17.0" y1="264.7" x2="21.5" y2="264.7" stroke="#c4c4c4" stroke-width="0.6" stroke-dasharray="1,0.6"/>
<polygon points="29.00,264.70 27.25,265.47 27.95,267.25 26.17,266.55 25.40,268.30 24.63,266.55 22.85,267.25 23.55,265.47 21.80,264.70 23.55,263.93 22.85,262.15 24.63,262.85 25.40,261.10 26.17,262.85 27.95,262.15 27.25,263.93" fill="#f8f020"/>
<path d="M25.4,261.3 L25.4,268.09999999999997 M22.0,264.7 L28.799999999999997,264.7 M23.0,262.3 L27.799999999999997,267.09999999999997 M27.799999999999997,262.3 L23.0,267.09999999999997" stroke="#000" stroke-width="0.9"/>
<circle cx="25.4" cy="264.7" r="1.3" fill="#f8f020"/>
<text x="31.8" y="267.0" font-size="6.4" fill="#000" stroke="#000" stroke-width="0.14" font-weight="normal" textLength="11.5" lengthAdjust="spacingAndGlyphs">*Z=0</text>
<line x1="17.0" y1="272.7" x2="21.5" y2="272.7" stroke="#c4c4c4" stroke-width="0.6" stroke-dasharray="1,0.6"/>
<polygon points="29.00,272.70 27.25,273.47 27.95,275.25 26.17,274.55 25.40,276.30 24.63,274.55 22.85,275.25 23.55,273.47 21.80,272.70 23.55,271.93 22.85,270.15 24.63,270.85 25.40,269.10 26.17,270.85 27.95,270.15 27.25,271.93" fill="#f8f020"/>
<path d="M25.4,269.3 L25.4,276.09999999999997 M22.0,272.7 L28.799999999999997,272.7 M23.0,270.3 L27.799999999999997,275.09999999999997 M27.799999999999997,270.3 L23.0,275.09999999999997" stroke="#000" stroke-width="0.9"/>
<circle cx="25.4" cy="272.7" r="1.3" fill="#f8f020"/>
<text x="31.8" y="275.0" font-size="6.4" fill="#000" stroke="#000" stroke-width="0.14" font-weight="normal" textLength="27" lengthAdjust="spacingAndGlyphs">*UNIFORM</text>
<line x1="17.0" y1="280.7" x2="21.5" y2="280.7" stroke="#c4c4c4" stroke-width="0.6" stroke-dasharray="1,0.6"/>
<polygon points="29.00,280.70 27.25,281.47 27.95,283.25 26.17,282.55 25.40,284.30 24.63,282.55 22.85,283.25 23.55,281.47 21.80,280.70 23.55,279.93 22.85,278.15 24.63,278.85 25.40,277.10 26.17,278.85 27.95,278.15 27.25,279.93" fill="#f8f020"/>
<path d="M25.4,277.3 L25.4,284.09999999999997 M22.0,280.7 L28.799999999999997,280.7 M23.0,278.3 L27.799999999999997,283.09999999999997 M27.799999999999997,278.3 L23.0,283.09999999999997" stroke="#000" stroke-width="0.9"/>
<circle cx="25.4" cy="280.7" r="1.3" fill="#f8f020"/>
<text x="31.8" y="283.0" font-size="6.4" fill="#000" stroke="#000" stroke-width="0.14" font-weight="normal" textLength="10" lengthAdjust="spacingAndGlyphs">*ZE</text>
</g>
<rect x="99.6" y="68.6" width="8.4" height="210.6" fill="#f0f0f0" />
<path d="M101.7,74.5 L103.3,72.2 L104.9,74.5 Z" fill="#303030"/>
<path d="M101.7,274.3 L103.3,276.6 L104.9,274.3 Z" fill="#303030"/>
<rect x="99.9" y="180.6" width="6.8" height="70.8" fill="url(#sg)" stroke="#a0a0a0" stroke-width="0.6" rx="1.2"/>
<line x1="102.3" y1="214.5" x2="105.1" y2="214.5" stroke="#808080" stroke-width="0.5" />
<line x1="102.3" y1="216" x2="105.1" y2="216" stroke="#808080" stroke-width="0.5" />
<line x1="102.3" y1="217.5" x2="105.1" y2="217.5" stroke="#808080" stroke-width="0.5" />
<rect x="108" y="56.9" width="3" height="225" fill="#f0f0f0" />
<rect x="110.2" y="56.9" width="0.8" height="225" fill="#d8d8d8" />
<rect x="0" y="279.2" width="111" height="2.6" fill="#f6f6f6" />
<rect x="0" y="282.4" width="111" height="8.6" fill="url(#hg)" />
<rect x="0" y="281.79999999999995" width="111" height="0.6" fill="#a8b4bc" />
<text x="1.9" y="289.0" font-size="6.6" fill="#3a3a4a" stroke="#3a3a4a" stroke-width="0.22" font-weight="normal" textLength="25.9" lengthAdjust="spacingAndGlyphs">Properties</text>
<path d="M104,284.79999999999995 L108,288.59999999999997 M108,284.79999999999995 L104,288.59999999999997" stroke="#101010" stroke-width="1.2"/>
<rect x="1" y="292.0" width="109.5" height="1.0" fill="#505050" />
<rect x="0" y="292.8" width="111" height="106.2" fill="#f0f0f0" />
<rect x="0" y="291.5" width="1.7" height="107.5" fill="#707070" />
<rect x="2.5" y="293.4" width="107" height="7.8" fill="#ebebeb" stroke="#ffffff" stroke-width="0.6" />
<rect x="2.5" y="301.1" width="107" height="0.7" fill="#a8a8a8" />
<rect x="101.8" y="293.6" width="6.8" height="7.4" fill="#f8f8f8" stroke="#a0a0a0" stroke-width="0.5" />
<text x="102.6" y="300.2" font-size="8" font-weight="bold" fill="#e8e000" stroke="#202000" stroke-width="0.5" textLength="5" lengthAdjust="spacingAndGlyphs">?</text>
<rect x="0" y="399" width="111" height="3.3" fill="#f6f6f6" />
<rect x="0" y="402.3" width="111" height="8.6" fill="url(#hg)" />
<rect x="0" y="401.7" width="111" height="0.6" fill="#a8b4bc" />
<text x="1.9" y="408.90000000000003" font-size="6.6" fill="#3a3a4a" stroke="#3a3a4a" stroke-width="0.22" font-weight="normal" textLength="33.4" lengthAdjust="spacingAndGlyphs">Selection Set</text>
<path d="M104,404.7 L108,408.5 M108,404.7 L104,408.5" stroke="#101010" stroke-width="1.2"/>
<rect x="0" y="410.9" width="111" height="0.8" fill="#f4f4f4" />
<rect x="1" y="411.6" width="109.5" height="1.1" fill="#404040" />
<rect x="0" y="412.6" width="111" height="101" fill="#f0f0f0" />
<rect x="4.3" y="414.3" width="9.8" height="9.2" fill="#f8f8f8" stroke="#c0c0c0" stroke-width="0.6" rx="1"/>
<rect x="16.6" y="414.3" width="9.8" height="9.2" fill="#f8f8f8" stroke="#c0c0c0" stroke-width="0.6" rx="1"/>
<rect x="28.6" y="414.3" width="9.8" height="9.2" fill="#f8f8f8" stroke="#c0c0c0" stroke-width="0.6" rx="1"/>
<rect x="40.6" y="414.3" width="9.8" height="9.2" fill="#f8f8f8" stroke="#c0c0c0" stroke-width="0.6" rx="1"/>
<rect x="52.6" y="414.3" width="9.8" height="9.2" fill="#f8f8f8" stroke="#c0c0c0" stroke-width="0.6" rx="1"/>
<rect x="4.3" y="414.3" width="9.8" height="9.2" fill="#e4e4e4" stroke="#505050" stroke-width="0.7" rx="1"/>
<rect x="6.2" y="416" width="1.2" height="6" fill="#303030" />
<rect x="8.4" y="416" width="1.2" height="6" fill="#303030" />
<rect x="10.6" y="416" width="1.2" height="6" fill="#303030" />
<path d="M21.5,416 L19,419 L20.7,419 L20.7,422 L22.3,422 L22.3,419 L24,419 Z" fill="#404040"/>
<path d="M33.5,422 L31,419 L32.7,419 L32.7,416 L34.3,416 L34.3,419 L36,419 Z" fill="#404040"/>
<path d="M42.5,415.8 L48.5,421.8 M48.5,415.8 L42.5,421.8" stroke="#d03030" stroke-width="0.9"/>
<rect x="53.5" y="415" width="8" height="7.8" fill="#f8f8f8" stroke="#8890b0" stroke-width="0.6" />
<rect x="53.8" y="415.3" width="7.4" height="1.6" fill="#8090e0" />
<path d="M55,416.8 L60,421.8 M60,416.8 L55,421.8" stroke="#d03030" stroke-width="0.9"/>
<text x="64.6" y="421.6" font-size="6.4" fill="#000" stroke="#000" stroke-width="0.22" font-weight="normal" textLength="22.8" lengthAdjust="spacingAndGlyphs">0 Entities</text>
<rect x="3.9" y="425.1" width="105.4" height="80.6" fill="#ffffff" stroke="#a0a0a0" stroke-width="0.6" />
<rect x="4.2" y="425.4" width="104.8" height="11.8" fill="#f2f2f2" />
<rect x="4.2" y="436.6" width="104.8" height="0.9" fill="#d8d8d8" />
<rect x="75.1" y="426" width="0.8" height="11" fill="#d0d0d0" />
<text x="6.9" y="434.2" font-size="6.6" fill="#101010" stroke="#101010" stroke-width="0.3" font-weight="normal" textLength="14.8" lengthAdjust="spacingAndGlyphs">Name</text>
<text x="78.3" y="434.2" font-size="6.6" fill="#101010" stroke="#101010" stroke-width="0.3" font-weight="normal" textLength="11.6" lengthAdjust="spacingAndGlyphs">Type</text>
<rect x="3.9" y="505.7" width="105.4" height="7.7" fill="#f0f0f0" />
<rect x="10.3" y="506.5" width="88.7" height="6.2" fill="url(#sgv)" stroke="#a0a0a0" stroke-width="0.5" rx="1"/>
<line x1="53" y1="508" x2="53" y2="511" stroke="#808080" stroke-width="0.5" />
<line x1="54.5" y1="508" x2="54.5" y2="511" stroke="#808080" stroke-width="0.5" />
<line x1="56" y1="508" x2="56" y2="511" stroke="#808080" stroke-width="0.5" />
<path d="M6.5,509.6 L8.2,508 L8.2,511.2 Z" fill="#303030"/>
<path d="M106.5,509.6 L104.8,508 L104.8,511.2 Z" fill="#303030"/>
<rect x="108.9" y="412.6" width="0.6" height="101" fill="#a0a0a0" />
<rect x="0" y="514" width="700" height="11" fill="#ececec" />
<rect x="0" y="514" width="700" height="2.3" fill="#fbfbf6" />
<rect x="0" y="522.0" width="700" height="0.9" fill="#fafafa" />
<rect x="0" y="523.0" width="700" height="2.0" fill="#8e9296" />
<rect x="154.5" y="522.2" width="2" height="1" fill="#a0a4a8" />
<rect x="235.5" y="522.2" width="2" height="1" fill="#a0a4a8" />
<text x="2.3" y="522.3" font-size="6.4" fill="#101010" stroke="#101010" stroke-width="0.12" font-weight="normal" textLength="46.5" lengthAdjust="spacingAndGlyphs">For Help, press F1.</text>
<rect x="317.1" y="516.3" width="157.2" height="0.7" fill="#a8a8a8" />
<rect x="317.1" y="516.3" width="0.7" height="6.4" fill="#a8a8a8" />
<rect x="473.7" y="516.3" width="0.6" height="6.4" fill="#ffffff" />
<rect x="476.3" y="516.3" width="45.99999999999994" height="0.7" fill="#a8a8a8" />
<rect x="476.3" y="516.3" width="0.7" height="6.4" fill="#a8a8a8" />
<rect x="521.6999999999999" y="516.3" width="0.6" height="6.4" fill="#ffffff" />
<rect x="524.3" y="516.3" width="36.30000000000007" height="0.7" fill="#a8a8a8" />
<rect x="524.3" y="516.3" width="0.7" height="6.4" fill="#a8a8a8" />
<rect x="560.0" y="516.3" width="0.6" height="6.4" fill="#ffffff" />
<rect x="562.3" y="516.3" width="36.30000000000007" height="0.7" fill="#a8a8a8" />
<rect x="562.3" y="516.3" width="0.7" height="6.4" fill="#a8a8a8" />
<rect x="598.0" y="516.3" width="0.6" height="6.4" fill="#ffffff" />
<rect x="600" y="516.3" width="53.700000000000045" height="0.7" fill="#a8a8a8" />
<rect x="600" y="516.3" width="0.7" height="6.4" fill="#a8a8a8" />
<rect x="653.1" y="516.3" width="0.6" height="6.4" fill="#ffffff" />
<rect x="655.1" y="516.3" width="43.89999999999998" height="0.7" fill="#a8a8a8" />
<rect x="655.1" y="516.3" width="0.7" height="6.4" fill="#a8a8a8" />
<rect x="698.4" y="516.3" width="0.6" height="6.4" fill="#ffffff" />
<text x="317.9" y="522.3" font-size="6.2" fill="#101010" stroke="#101010" stroke-width="0.12" font-weight="normal" textLength="7.2" lengthAdjust="spacingAndGlyphs">L0</text>
<text x="525.9" y="522.3" font-size="6.2" fill="#101010" stroke="#101010" stroke-width="0.12" font-weight="normal" textLength="19.2" lengthAdjust="spacingAndGlyphs">Lat 38.3</text>
<text x="563.8" y="522.3" font-size="6.2" fill="#101010" stroke="#101010" stroke-width="0.12" font-weight="normal" textLength="19.8" lengthAdjust="spacingAndGlyphs">Lon 51.6</text>
<text x="601.4" y="522.3" font-size="6.2" fill="#101010" stroke="#101010" stroke-width="0.12" font-weight="normal" textLength="31.5" lengthAdjust="spacingAndGlyphs">Radius 0.598</text>
<text x="656.6" y="522.3" font-size="6.2" fill="#101010" stroke="#101010" stroke-width="0.12" font-weight="normal" textLength="15.5" lengthAdjust="spacingAndGlyphs">Tilt 0.0</text>
<g>
<polygon points="499.8,102.9 498.6,107.1 497.2,112.6 495.4,119.1 493.4,126.5 491.2,134.4 488.9,142.8 486.4,151.4 483.8,160.0 481.1,169.0 478.1,178.9 475.0,189.2 471.7,199.8 468.3,210.5 464.9,220.9 461.5,230.8 458.1,240.0 454.7,248.6 451.2,257.0 447.7,265.1 444.1,272.9 440.6,280.3 437.2,287.3 433.8,293.9 430.6,300.0 427.5,305.6 424.6,310.7 421.7,315.3 418.9,319.6 416.1,323.6 413.5,327.3 410.9,330.8 408.3,334.3 405.8,337.6 403.4,340.6 401.0,343.4 398.7,346.0 396.5,348.4 394.3,350.7 392.1,352.8 390.0,354.9 388.0,356.9 386.2,358.6 384.5,360.3 382.9,361.8 381.1,363.2 379.3,364.5 377.2,365.8 374.9,367.1 372.3,368.3 369.5,369.5 366.4,370.7 363.3,371.7 360.0,372.7 356.7,373.6 353.4,374.5 350.0,375.2 346.8,375.9 343.6,376.5 340.5,377.0 337.4,377.4 334.0,377.8 330.2,378.0 326.1,378.1 321.4,378.0 316.0,377.8 310.0,377.4 303.5,376.9 296.7,376.3 289.8,375.6 282.9,374.8 276.3,373.9 270.0,373.0 263.9,372.0 257.8,370.8 251.7,369.6 245.7,368.3 240.0,367.0 234.6,365.7 229.5,364.4 225.0,363.3 220.9,362.2 217.1,361.2 213.6,360.1 210.5,359.1 207.8,358.2 205.4,357.4 203.3,356.7 201.7,356.2 180.2,372.9 180.2,372.9 183.8,373.8 188.7,375.0 194.5,376.4 200.9,378.0 207.6,379.7 214.0,381.2 220.0,382.6 225.0,383.8 229.2,384.7 232.8,385.5 236.0,386.2 239.1,386.9 242.0,387.4 245.0,388.0 248.2,388.5 251.7,389.0 255.5,389.5 259.6,390.1 263.7,390.6 268.0,391.1 272.2,391.5 276.5,391.9 280.8,392.2 285.0,392.4 289.1,392.6 293.3,392.7 297.4,392.8 301.6,392.8 305.7,392.7 309.8,392.5 313.9,392.2 318.0,391.7 322.1,391.1 326.2,390.3 330.3,389.4 334.4,388.4 338.5,387.3 342.4,386.1 346.3,384.8 350.0,383.3 353.6,381.6 357.2,379.8 360.7,377.7 364.1,375.6 367.3,373.4 370.4,371.3 373.3,369.3 376.0,367.5 378.4,365.9 380.4,364.5 382.1,363.2 383.8,362.0 385.4,360.7 387.0,359.3 388.9,357.8 391.0,356.0 393.4,354.1 395.9,352.1 398.5,350.1 401.2,347.9 404.0,345.5 406.9,342.8 409.9,339.9 412.9,336.6 416.0,333.0 419.2,329.2 422.4,325.2 425.8,320.8 429.2,316.2 432.6,311.2 436.2,305.8 439.7,300.0 443.3,293.8 447.1,287.1 450.9,280.1 454.8,272.7 458.6,265.0 462.5,257.0 466.2,248.6 469.9,240.0 473.6,230.7 477.3,220.7 481.1,210.1 484.7,199.3 488.3,188.6 491.6,178.3 494.7,168.7 497.5,160.0 500.0,152.1 502.2,144.4 504.3,137.2 506.1,130.5 507.7,124.4 509.1,119.1 510.2,114.6 511.2,111.0" fill="#735a82"/>
<polygon points="499.8,102.9 498.6,107.1 497.2,112.6 495.4,119.1 493.4,126.5 491.2,134.4 488.9,142.8 486.4,151.4 483.8,160.0 481.1,169.0 478.1,178.9 475.0,189.2 471.7,199.8 468.3,210.5 464.9,220.9 461.5,230.8 458.1,240.0 454.7,248.6 451.2,257.0 447.7,265.1 444.1,272.9 440.6,280.3 437.2,287.3 433.8,293.9 430.6,300.0 427.5,305.6 424.6,310.7 421.7,315.3 418.9,319.6 416.1,323.6 413.5,327.3 410.9,330.8 408.3,334.3 405.8,337.6 403.4,340.6 401.0,343.4 398.7,346.0 396.5,348.4 394.3,350.7 392.1,352.8 390.0,354.9 388.0,356.9 386.2,358.6 384.5,360.3 382.9,361.8 381.1,363.2 379.3,364.5 377.2,365.8 374.9,367.1 376.0,367.5 378.4,365.9 380.4,364.5 382.1,363.2 383.8,362.0 385.4,360.7 387.0,359.3 388.9,357.8 391.0,356.0 393.4,354.1 395.9,352.1 398.5,350.1 401.2,347.9 404.0,345.5 406.9,342.8 409.9,339.9 412.9,336.6 416.0,333.0 419.2,329.2 422.4,325.2 425.8,320.8 429.2,316.2 432.6,311.2 436.2,305.8 439.7,300.0 443.3,293.8 447.1,287.1 450.9,280.1 454.8,272.7 458.6,265.0 462.5,257.0 466.2,248.6 469.9,240.0 473.6,230.7 477.3,220.7 481.1,210.1 484.7,199.3 488.3,188.6 491.6,178.3 494.7,168.7 497.5,160.0 500.0,152.1 502.2,144.4 504.3,137.2 506.1,130.5 507.7,124.4 509.1,119.1 510.2,114.6 511.2,111.0" fill="#604042"/>
<polygon points="182.6,390.5 189.3,383.8 189.3,393.5" fill="#6a5880"/>
<polygon points="499.8,102.9 516.4,89 511.2,111" fill="#6c5a88"/>
<polygon points="511.2,111.0 510.2,114.6 509.1,119.1 507.7,124.4 506.1,130.5 504.3,137.2 502.2,144.4 500.0,152.1 497.5,160.0 494.7,168.7 491.6,178.3 488.3,188.6 484.7,199.3 481.1,210.1 477.3,220.7 473.6,230.7 469.9,240.0 466.2,248.6 462.5,257.0 458.6,265.0 454.8,272.7 450.9,280.1 447.1,287.1 443.3,293.8 439.7,300.0 436.2,305.8 432.6,311.2 429.2,316.2 425.8,320.8 422.4,325.2 419.2,329.2 416.0,333.0 412.9,336.6 409.9,339.9 406.9,342.8 404.0,345.5 401.2,347.9 398.5,350.1 395.9,352.1 393.4,354.1 391.0,356.0 388.9,357.8 387.0,359.3 385.4,360.7 383.8,362.0 382.1,363.2 380.4,364.5 378.4,365.9 376.0,367.5 373.3,369.3 370.4,371.3 367.3,373.4 364.1,375.6 360.7,377.7 357.2,379.8 353.6,381.6 350.0,383.3 346.3,384.8 342.4,386.1 338.5,387.3 334.4,388.4 330.3,389.4 326.2,390.3 322.1,391.1 318.0,391.7 313.9,392.2 309.8,392.5 305.7,392.7 301.6,392.8 297.4,392.8 293.3,392.7 289.1,392.6 285.0,392.4 280.8,392.2 276.5,391.9 272.2,391.5 268.0,391.1 263.7,390.6 259.6,390.1 255.5,389.5 251.7,389.0 248.2,388.5 245.0,388.0 242.0,387.4 239.1,386.9 236.0,386.2 232.8,385.5 229.2,384.7 225.0,383.8 220.0,382.6 214.0,381.2 207.6,379.7 200.9,378.0 194.5,376.4 188.7,375.0 183.8,373.8 180.2,372.9 182.6,390.5 189.3,383.8 192.1,384.5 195.7,385.5 200.1,386.7 205.0,388.0 210.1,389.4 215.3,390.8 220.3,392.2 225.0,393.5 229.5,394.8 234.0,396.1 238.6,397.4 243.2,398.7 247.6,400.0 252.0,401.2 256.1,402.3 260.0,403.3 263.6,404.1 266.8,404.8 269.8,405.4 272.7,405.9 275.6,406.3 278.5,406.7 281.6,407.1 285.0,407.6 288.7,408.1 292.5,408.7 296.4,409.4 300.5,410.0 304.6,410.5 308.8,410.8 312.9,411.0 317.0,411.0 321.1,410.7 325.2,410.3 329.4,409.8 333.5,409.1 337.7,408.2 341.8,407.2 345.9,406.1 350.0,404.8 354.1,403.3 358.3,401.6 362.5,399.7 366.6,397.7 370.6,395.7 374.5,393.6 378.1,391.5 381.4,389.5 384.3,387.6 386.9,385.8 389.1,384.0 391.2,382.2 393.3,380.4 395.4,378.4 397.6,376.2 400.0,373.8 402.6,371.3 405.2,368.8 407.9,366.2 410.7,363.5 413.5,360.5 416.4,357.1 419.5,353.3 422.6,349.0 425.9,344.1 429.3,338.7 432.9,332.9 436.6,326.7 440.3,320.2 443.9,313.6 447.5,306.8 451.0,300.0 454.4,293.2 457.7,286.2 461.0,279.2 464.2,271.9 467.4,264.4 470.7,256.7 473.9,248.5 477.1,240.0 480.4,230.7 483.9,220.6 487.4,210.0 490.9,199.2 494.2,188.4 497.4,178.1 500.3,168.5 502.9,160.0 505.2,152.2 507.2,144.9 509.0,138.0 510.6,131.7 512.0,125.9 513.1,120.9 514.2,116.7 515.0,113.3" fill="#6a5880"/>
<polygon points="515.0,113.3 514.2,116.7 513.1,120.9 512.0,125.9 510.6,131.7 509.0,138.0 507.2,144.9 505.2,152.2 502.9,160.0 500.3,168.5 497.4,178.1 494.2,188.4 490.9,199.2 487.4,210.0 483.9,220.6 480.4,230.7 477.1,240.0 473.9,248.5 470.7,256.7 467.4,264.4 464.2,271.9 461.0,279.2 457.7,286.2 454.4,293.2 451.0,300.0 447.5,306.8 443.9,313.6 440.3,320.2 436.6,326.7 432.9,332.9 429.3,338.7 425.9,344.1 422.6,349.0 419.5,353.3 416.4,357.1 413.5,360.5 410.7,363.5 407.9,366.2 405.2,368.8 402.6,371.3 400.0,373.8 397.6,376.2 395.4,378.4 393.3,380.4 391.2,382.2 389.1,384.0 386.9,385.8 384.3,387.6 381.4,389.5 378.1,391.5 374.5,393.6 370.6,395.7 366.6,397.7 362.5,399.7 358.3,401.6 354.1,403.3 350.0,404.8 345.9,406.1 341.8,407.2 337.7,408.2 333.5,409.1 329.4,409.8 325.2,410.3 321.1,410.7 317.0,411.0 312.9,411.0 308.8,410.8 304.6,410.5 300.5,410.0 296.4,409.4 292.5,408.7 288.7,408.1 285.0,407.6 281.6,407.1 278.5,406.7 275.6,406.3 272.7,405.9 269.8,405.4 266.8,404.8 263.6,404.1 260.0,403.3 256.1,402.3 252.0,401.2 247.6,400.0 243.2,398.7 238.6,397.4 234.0,396.1 229.5,394.8 225.0,393.5 220.3,392.2 215.3,390.8 210.1,389.4 205.0,388.0 200.1,386.7 195.7,385.5 192.1,384.5 189.3,383.8 189.3,393.3 189.3,393.3 192.1,393.8 195.7,394.5 200.1,395.3 205.0,396.2 210.1,397.1 215.3,398.1 220.3,399.1 225.0,400.0 229.5,400.9 234.0,401.9 238.6,403.0 243.2,404.0 247.6,405.0 252.0,405.9 256.1,406.8 260.0,407.5 263.6,408.1 266.8,408.6 269.8,409.0 272.7,409.4 275.6,409.7 278.5,410.0 281.6,410.2 285.0,410.5 288.7,410.8 292.5,411.1 296.4,411.3 300.5,411.6 304.6,411.8 308.8,411.9 312.9,412.0 317.0,412.0 321.0,412.0 324.9,412.0 328.7,411.9 332.6,411.8 336.6,411.6 340.8,411.1 345.2,410.5 350.0,409.5 355.3,408.2 361.1,406.7 367.3,404.9 373.6,403.0 379.9,400.9 385.9,398.6 391.6,396.2 396.7,393.8 401.2,391.3 405.3,388.6 409.1,385.8 412.6,382.9 415.9,379.9 419.2,376.7 422.4,373.4 425.7,370.0 428.9,366.5 432.1,362.9 435.1,359.2 438.0,355.3 441.0,351.3 443.9,347.1 446.9,342.5 450.0,337.7 453.2,332.5 456.5,326.9 459.9,321.0 463.3,315.0 466.7,308.7 470.0,302.4 473.2,296.2 476.2,290.0 479.0,284.1 481.7,278.4 484.3,272.7 486.7,267.0 489.2,261.0 491.7,254.7 494.3,247.7 497.1,240.0 500.1,231.2 503.3,221.3 506.6,210.7 510.0,199.8 513.3,188.8 516.4,178.3 519.3,168.6 521.9,160.0 524.2,152.3 526.3,145.0 528.2,138.2 529.9,131.9 531.4,126.3 532.8,121.3 533.9,117.1 534.8,113.8" fill="#5c4430"/>
<linearGradient id="pinkg" gradientUnits="userSpaceOnUse" x1="520" y1="120" x2="330" y2="405"><stop offset="0" stop-color="#925a9a"/><stop offset="0.6" stop-color="#8c5a9e"/><stop offset="1" stop-color="#7a58a0"/></linearGradient>
<polygon points="515.0,113.3 514.2,116.7 513.1,120.9 512.0,125.9 510.6,131.7 509.0,138.0 507.2,144.9 505.2,152.2 502.9,160.0 500.3,168.5 497.4,178.1 494.2,188.4 490.9,199.2 487.4,210.0 483.9,220.6 480.4,230.7 477.1,240.0 473.9,248.5 470.7,256.7 467.4,264.4 464.2,271.9 461.0,279.2 457.7,286.2 454.4,293.2 451.0,300.0 447.5,306.8 443.9,313.6 440.3,320.2 436.6,326.7 432.9,332.9 429.3,338.7 425.9,344.1 422.6,349.0 419.5,353.3 416.4,357.1 413.5,360.5 410.7,363.5 407.9,366.2 405.2,368.8 402.6,371.3 400.0,373.8 397.6,376.2 395.4,378.4 393.3,380.4 391.2,382.2 389.1,384.0 386.9,385.8 384.3,387.6 381.4,389.5 378.1,391.5 374.5,393.6 370.6,395.7 366.6,397.7 362.5,399.7 358.3,401.6 354.1,403.3 350.0,404.8 345.9,406.1 341.8,407.2 337.7,408.2 333.5,409.1 329.4,409.8 325.2,410.3 321.1,410.7 317.0,411.0 317.0,412.0 321.0,412.0 324.9,412.0 328.7,411.9 332.6,411.8 336.6,411.6 340.8,411.1 345.2,410.5 350.0,409.5 355.3,408.2 361.1,406.7 367.3,404.9 373.6,403.0 379.9,400.9 385.9,398.6 391.6,396.2 396.7,393.8 401.2,391.3 405.3,388.6 409.1,385.8 412.6,382.9 415.9,379.9 419.2,376.7 422.4,373.4 425.7,370.0 428.9,366.5 432.1,362.9 435.1,359.2 438.0,355.3 441.0,351.3 443.9,347.1 446.9,342.5 450.0,337.7 453.2,332.5 456.5,326.9 459.9,321.0 463.3,315.0 466.7,308.7 470.0,302.4 473.2,296.2 476.2,290.0 479.0,284.1 481.7,278.4 484.3,272.7 486.7,267.0 489.2,261.0 491.7,254.7 494.3,247.7 497.1,240.0 500.1,231.2 503.3,221.3 506.6,210.7 510.0,199.8 513.3,188.8 516.4,178.3 519.3,168.6 521.9,160.0 524.2,152.3 526.3,145.0 528.2,138.2 529.9,131.9 531.4,126.3 532.8,121.3 533.9,117.1 534.8,113.8" fill="url(#pinkg)"/>
<linearGradient id="tealg" gradientUnits="userSpaceOnUse" x1="540" y1="120" x2="200" y2="400"><stop offset="0" stop-color="#3070a0"/><stop offset="0.55" stop-color="#3c7888"/><stop offset="1" stop-color="#428a7e"/></linearGradient>
<polygon points="534.8,113.8 533.9,117.1 532.8,121.3 531.4,126.3 529.9,131.9 528.2,138.2 526.3,145.0 524.2,152.3 521.9,160.0 519.3,168.6 516.4,178.3 513.3,188.8 510.0,199.8 506.6,210.7 503.3,221.3 500.1,231.2 497.1,240.0 494.3,247.7 491.7,254.7 489.2,261.0 486.7,267.0 484.3,272.7 481.7,278.4 479.0,284.1 476.2,290.0 473.2,296.2 470.0,302.4 466.7,308.7 463.3,315.0 459.9,321.0 456.5,326.9 453.2,332.5 450.0,337.7 446.9,342.5 443.9,347.1 441.0,351.3 438.0,355.3 435.1,359.2 432.1,362.9 428.9,366.5 425.7,370.0 422.4,373.4 419.2,376.7 415.9,379.9 412.6,382.9 409.1,385.8 405.3,388.6 401.2,391.3 396.7,393.8 391.6,396.2 385.9,398.6 379.9,400.9 373.6,403.0 367.3,404.9 361.1,406.7 355.3,408.2 350.0,409.5 345.2,410.5 340.8,411.1 336.6,411.6 332.6,411.8 328.7,411.9 324.9,412.0 321.0,412.0 317.0,412.0 312.9,412.0 308.8,411.9 304.6,411.8 300.5,411.6 296.4,411.3 292.5,411.1 288.7,410.8 285.0,410.5 281.6,410.2 278.5,410.0 275.6,409.7 272.7,409.4 269.8,409.0 266.8,408.6 263.6,408.1 260.0,407.5 256.1,406.8 252.0,405.9 247.6,405.0 243.2,404.0 238.6,403.0 234.0,401.9 229.5,400.9 225.0,400.0 220.3,399.1 215.3,398.1 210.1,397.1 205.0,396.2 200.1,395.3 195.7,394.5 192.1,393.8 189.3,393.3 189.3,393.8 192.1,394.4 195.7,395.3 200.1,396.3 205.0,397.4 210.1,398.6 215.3,399.8 220.3,401.0 225.0,402.2 229.3,403.4 233.3,404.6 237.2,405.8 241.2,407.0 245.3,408.3 249.7,409.5 254.6,410.8 260.0,412.0 266.2,413.3 273.0,414.7 280.4,416.1 288.0,417.5 295.7,418.8 303.2,419.9 310.4,420.8 317.0,421.4 323.1,421.7 328.9,421.8 334.4,421.7 339.7,421.5 344.9,421.0 350.0,420.4 355.0,419.6 360.0,418.6 364.9,417.5 369.7,416.3 374.3,415.0 378.9,413.4 383.4,411.6 388.0,409.6 392.5,407.1 397.1,404.3 401.8,401.0 406.7,397.2 411.5,393.0 416.4,388.6 421.2,383.9 425.8,379.2 430.2,374.6 434.3,370.0 438.1,365.5 441.6,361.1 445.0,356.6 448.2,352.0 451.2,347.4 454.2,342.7 457.1,337.9 460.0,333.0 462.8,328.0 465.6,322.8 468.2,317.6 470.8,312.3 473.3,306.9 475.8,301.4 478.4,295.8 481.0,290.0 483.7,284.0 486.5,277.8 489.3,271.3 492.2,264.8 494.9,258.3 497.6,252.0 500.0,245.8 502.3,240.0 504.3,234.5 506.1,229.3 507.8,224.3 509.4,219.4 510.8,214.6 512.3,209.8 513.7,204.9 515.2,200.0 516.7,195.0 518.2,190.0 519.6,184.9 521.0,179.9 522.5,174.9 523.9,169.9 525.3,164.9 526.7,160.0 528.2,154.8 529.8,149.3 531.5,143.7 533.1,138.2 534.7,133.0 536.1,128.3 537.2,124.4 538.1,121.4" fill="url(#tealg)"/>
<polygon points="538.1,121.4 537.2,124.4 536.1,128.3 534.7,133.0 533.1,138.2 531.5,143.7 529.8,149.3 528.2,154.8 526.7,160.0 525.3,164.9 523.9,169.9 522.5,174.9 521.0,179.9 519.6,184.9 518.2,190.0 516.7,195.0 515.2,200.0 513.7,204.9 512.3,209.8 510.8,214.6 509.4,219.4 507.8,224.3 506.1,229.3 504.3,234.5 502.3,240.0 500.0,245.8 497.6,252.0 494.9,258.3 492.2,264.8 489.3,271.3 486.5,277.8 483.7,284.0 481.0,290.0 478.4,295.8 475.8,301.4 473.3,306.9 470.8,312.3 468.2,317.6 465.6,322.8 462.8,328.0 460.0,333.0 457.1,337.9 454.2,342.7 451.2,347.4 448.2,352.0 445.0,356.6 441.6,361.1 438.1,365.5 434.3,370.0 430.2,374.6 425.8,379.2 421.2,383.9 416.4,388.6 411.5,393.0 406.7,397.2 401.8,401.0 397.1,404.3 392.5,407.1 388.0,409.6 383.4,411.6 378.9,413.4 374.3,415.0 369.7,416.3 364.9,417.5 360.0,418.6 355.0,419.6 350.0,420.4 344.9,421.0 339.7,421.5 334.4,421.7 328.9,421.8 323.1,421.7 317.0,421.4 310.4,420.8 303.2,419.9 295.7,418.8 288.0,417.5 280.4,416.1 273.0,414.7 266.2,413.3 260.0,412.0 254.6,410.8 249.7,409.5 245.3,408.3 241.2,407.0 237.2,405.8 233.3,404.6 229.3,403.4 225.0,402.2 220.3,401.0 215.3,399.8 210.1,398.6 205.0,397.4 200.1,396.3 195.7,395.3 192.1,394.4 189.3,393.8 198.6,425.5 206.7,418.8 208.5,419.4 210.7,420.1 213.4,420.9 216.5,421.9 219.7,422.9 223.2,424.0 226.6,425.0 230.0,426.0 233.4,427.0 237.0,427.9 240.8,428.9 244.6,429.9 248.5,430.9 252.3,431.9 256.2,432.9 260.0,433.8 263.6,434.7 267.0,435.6 270.3,436.4 273.7,437.2 277.2,438.0 281.0,438.8 285.2,439.6 290.0,440.4 295.5,441.2 301.7,442.1 308.5,443.0 315.4,443.9 322.4,444.7 329.3,445.4 335.6,445.9 341.4,446.2 346.5,446.3 351.0,446.4 355.2,446.3 359.1,446.0 363.0,445.6 367.0,445.0 371.1,444.3 375.7,443.3 380.6,442.3 385.6,441.3 390.7,440.2 396.0,438.8 401.4,437.2 406.8,435.1 412.4,432.4 418.0,429.0 423.9,424.8 430.1,419.7 436.6,414.0 443.1,407.9 449.4,401.6 455.5,395.2 461.0,388.9 466.0,383.0 470.2,377.4 473.9,371.9 477.1,366.5 480.0,361.0 482.8,355.5 485.5,349.8 488.3,343.9 491.4,337.6 494.7,331.1 498.0,324.6 501.4,317.9 504.8,311.0 508.2,303.8 511.6,296.3 515.0,288.4 518.3,280.0 521.7,270.8 525.2,260.6 528.8,249.9 532.3,238.9 535.7,228.1 538.9,217.7 541.7,208.2 544.2,200.0 546.2,193.0 547.9,187.0 549.3,181.7 550.4,176.9 551.4,172.5 552.3,168.4 553.3,164.3 554.3,160.0 555.4,155.5 556.6,151.0 557.7,146.5 558.7,142.2 559.7,138.3 560.6,134.8 561.3,131.8 561.9,129.5" fill="#705880"/>
<polygon points="561.9,129.5 561.3,131.8 560.6,134.8 559.7,138.3 558.7,142.2 557.7,146.5 556.6,151.0 555.4,155.5 554.3,160.0 553.3,164.3 552.3,168.4 551.4,172.5 550.4,176.9 549.3,181.7 547.9,187.0 546.2,193.0 544.2,200.0 541.7,208.2 538.9,217.7 535.7,228.1 532.3,238.9 528.8,249.9 525.2,260.6 521.7,270.8 518.3,280.0 515.0,288.4 511.6,296.3 508.2,303.8 504.8,311.0 501.4,317.9 498.0,324.6 494.7,331.1 491.4,337.6 488.3,343.9 485.5,349.8 482.8,355.5 480.0,361.0 477.1,366.5 473.9,371.9 470.2,377.4 466.0,383.0 461.0,388.9 455.5,395.2 449.4,401.6 443.1,407.9 436.6,414.0 430.1,419.7 423.9,424.8 418.0,429.0 412.4,432.4 406.8,435.1 401.4,437.2 396.0,438.8 390.7,440.2 385.6,441.3 380.6,442.3 375.7,443.3 371.1,444.3 367.0,445.0 363.0,445.6 359.1,446.0 355.2,446.3 351.0,446.4 346.5,446.3 341.4,446.2 335.6,445.9 329.3,445.4 322.4,444.7 315.4,443.9 308.5,443.0 301.7,442.1 295.5,441.2 290.0,440.4 285.2,439.6 281.0,438.8 277.2,438.0 273.7,437.2 270.3,436.4 267.0,435.6 263.6,434.7 260.0,433.8 256.2,432.9 252.3,431.9 248.5,430.9 244.6,429.9 240.8,428.9 237.0,427.9 233.4,427.0 230.0,426.0 226.6,425.0 223.2,424.0 219.7,422.9 216.5,421.9 213.4,420.9 210.7,420.1 208.5,419.4 206.7,418.8 198.6,425.5 198.6,425.5 201.0,426.2 204.3,427.2 208.1,428.3 212.4,429.6 216.9,430.9 221.5,432.2 225.9,433.4 230.0,434.5 233.8,435.5 237.6,436.4 241.4,437.3 245.1,438.2 248.8,439.0 252.5,439.8 256.3,440.6 260.0,441.4 263.6,442.1 267.1,442.8 270.5,443.5 273.9,444.1 277.4,444.8 281.2,445.4 285.4,446.0 290.0,446.7 295.2,447.5 301.0,448.3 307.1,449.2 313.5,450.1 320.0,451.0 326.3,451.6 332.4,452.1 338.0,452.4 343.2,452.5 348.0,452.4 352.7,452.2 357.2,451.8 361.7,451.3 366.2,450.6 370.8,449.6 375.7,448.4 380.9,446.9 386.3,445.1 391.9,443.1 397.5,440.9 403.0,438.5 408.4,436.1 413.4,433.5 418.1,431.0 422.3,428.5 426.2,425.9 429.8,423.2 433.3,420.5 436.6,417.6 439.9,414.6 443.2,411.5 446.7,408.1 450.3,404.6 454.0,400.9 457.7,397.0 461.4,393.0 465.0,388.9 468.5,384.6 472.0,380.2 475.2,375.7 478.2,371.1 481.0,366.4 483.7,361.6 486.2,356.7 488.8,351.5 491.4,346.2 494.1,340.6 497.1,334.8 500.3,328.8 503.6,322.7 507.0,316.4 510.5,309.8 514.0,303.0 517.5,295.8 521.0,288.2 524.4,280.0 527.8,270.9 531.3,260.8 534.9,250.1 538.4,239.1 541.8,228.2 544.9,217.8 547.8,208.3 550.3,200.0 552.4,193.1 554.1,187.1 555.5,182.0 556.7,177.3 557.7,173.1 558.8,168.9 559.8,164.6 561.0,160.0 562.3,154.9 563.7,149.6 565.1,144.1 566.4,138.7 567.7,133.6 568.8,129.1 569.8,125.3 570.5,122.4" fill="#5a4048"/>
<polygon points="561.9,129.5 561.3,131.8 560.6,134.8 559.7,138.3 558.7,142.2 557.7,146.5 556.6,151.0 555.4,155.5 554.3,160.0 553.3,164.3 552.3,168.4 551.4,172.5 550.4,176.9 549.3,181.7 547.9,187.0 546.2,193.0 544.2,200.0 541.7,208.2 538.9,217.7 535.7,228.1 532.3,238.9 528.8,249.9 525.2,260.6 521.7,270.8 518.3,280.0 515.0,288.4 511.6,296.3 508.2,303.8 504.8,311.0 501.4,317.9 498.0,324.6 494.7,331.1 491.4,337.6 488.3,343.9 485.5,349.8 482.8,355.5 480.0,361.0 477.1,366.5 473.9,371.9 470.2,377.4 466.0,383.0 461.0,388.9 455.5,395.2 449.4,401.6 443.1,407.9 436.6,414.0 439.9,414.6 443.2,411.5 446.7,408.1 450.3,404.6 454.0,400.9 457.7,397.0 461.4,393.0 465.0,388.9 468.5,384.6 472.0,380.2 475.2,375.7 478.2,371.1 481.0,366.4 483.7,361.6 486.2,356.7 488.8,351.5 491.4,346.2 494.1,340.6 497.1,334.8 500.3,328.8 503.6,322.7 507.0,316.4 510.5,309.8 514.0,303.0 517.5,295.8 521.0,288.2 524.4,280.0 527.8,270.9 531.3,260.8 534.9,250.1 538.4,239.1 541.8,228.2 544.9,217.8 547.8,208.3 550.3,200.0 552.4,193.1 554.1,187.1 555.5,182.0 556.7,177.3 557.7,173.1 558.8,168.9 559.8,164.6 561.0,160.0 562.3,154.9 563.7,149.6 565.1,144.1 566.4,138.7 567.7,133.6 568.8,129.1 569.8,125.3 570.5,122.4" fill="#6c5a88"/>
<polyline points="482.9,165.7 497.9,177.1" fill="none" stroke="#b05a2a" stroke-width="0.7" opacity="1" stroke-linejoin="round"/>
<polyline points="482.9,165.7 499.3,153.0" fill="none" stroke="#b05a2a" stroke-width="0.7" opacity="1" stroke-linejoin="round"/>
<polyline points="519.3,186.4 544.3,198.6" fill="none" stroke="#b05a2a" stroke-width="0.7" opacity="1" stroke-linejoin="round"/>
<polyline points="546.4,190.7 554.3,185.0" fill="none" stroke="#b05a2a" stroke-width="0.7" opacity="1" stroke-linejoin="round"/>
<polyline points="462.9,226.4 477.9,238.6" fill="none" stroke="#b05a2a" stroke-width="0.7" opacity="1" stroke-linejoin="round"/>
<polyline points="462.9,226.4 478.6,214.3" fill="none" stroke="#b05a2a" stroke-width="0.7" opacity="1" stroke-linejoin="round"/>
<polyline points="499.0,250.7 522.4,266.9" fill="none" stroke="#b05a2a" stroke-width="0.7" opacity="1" stroke-linejoin="round"/>
<polyline points="528.1,251.7 535.2,246.4" fill="none" stroke="#b05a2a" stroke-width="0.7" opacity="1" stroke-linejoin="round"/>
<polyline points="438.6,284.3 454.3,297.1" fill="none" stroke="#b05a2a" stroke-width="0.7" opacity="1" stroke-linejoin="round"/>
<polyline points="438.6,284.3 454.3,270.7" fill="none" stroke="#b05a2a" stroke-width="0.7" opacity="1" stroke-linejoin="round"/>
<polyline points="473.1,310.7 495.5,331.0" fill="none" stroke="#b05a2a" stroke-width="0.7" opacity="1" stroke-linejoin="round"/>
<polyline points="506.4,310.7 514.3,304.3" fill="none" stroke="#b05a2a" stroke-width="0.7" opacity="1" stroke-linejoin="round"/>
<polyline points="408.6,334.3 422.1,349.3" fill="none" stroke="#b05a2a" stroke-width="0.7" opacity="1" stroke-linejoin="round"/>
<polyline points="440.0,362.9 462.5,388.5" fill="none" stroke="#b05a2a" stroke-width="0.7" opacity="1" stroke-linejoin="round"/>
<polyline points="369.5,371.5 381.4,389.5" fill="none" stroke="#b05a2a" stroke-width="0.7" opacity="1" stroke-linejoin="round"/>
<polyline points="396.7,403.8 418.0,429.0" fill="none" stroke="#b05a2a" stroke-width="0.7" opacity="1" stroke-linejoin="round"/>
<polyline points="334.3,378.0 318.0,391.7 323.8,410.0" fill="none" stroke="#b05a2a" stroke-width="0.7" opacity="1" stroke-linejoin="round"/>
<polyline points="336.0,421.5 353.4,452.0" fill="none" stroke="#b05a2a" stroke-width="0.7" opacity="1" stroke-linejoin="round"/>
<polyline points="270.0,373.0 251.7,389.0 254.5,405.7" fill="none" stroke="#b05a2a" stroke-width="0.7" opacity="1" stroke-linejoin="round"/>
<polyline points="264.5,415.2 277.0,444.3" fill="none" stroke="#b05a2a" stroke-width="0.7" opacity="1" stroke-linejoin="round"/>
<polyline points="497.9,177.1 517.1,177.9" fill="none" stroke="#f04878" stroke-width="1.0" opacity="1" stroke-linejoin="round"/>
<polyline points="477.9,238.6 496.4,240.7" fill="none" stroke="#f04878" stroke-width="1.0" opacity="1" stroke-linejoin="round"/>
<polyline points="454.3,297.1 471.4,300.0" fill="none" stroke="#f04878" stroke-width="1.0" opacity="1" stroke-linejoin="round"/>
<polyline points="422.1,349.3 439.3,352.9" fill="none" stroke="#f04878" stroke-width="1.0" opacity="1" stroke-linejoin="round"/>
<polyline points="381.4,389.5 396.7,393.8" fill="none" stroke="#f04878" stroke-width="1.0" opacity="1" stroke-linejoin="round"/>
<polyline points="517.1,177.9 519.3,186.4" fill="none" stroke="#20f020" stroke-width="1.0" opacity="1" stroke-linejoin="round"/>
<polyline points="496.4,240.7 499.0,250.7" fill="none" stroke="#20f020" stroke-width="1.0" opacity="1" stroke-linejoin="round"/>
<polyline points="471.4,300.0 473.1,310.7" fill="none" stroke="#20f020" stroke-width="1.0" opacity="1" stroke-linejoin="round"/>
<polyline points="439.3,352.9 440.0,362.9" fill="none" stroke="#20f020" stroke-width="1.0" opacity="1" stroke-linejoin="round"/>
<polyline points="396.7,393.8 396.7,403.8" fill="none" stroke="#20f020" stroke-width="1.0" opacity="1" stroke-linejoin="round"/>
<polyline points="336.0,411.0 336.0,421.5" fill="none" stroke="#20f020" stroke-width="1.0" opacity="1" stroke-linejoin="round"/>
<polyline points="264.0,403.8 264.5,415.2" fill="none" stroke="#20f020" stroke-width="1.0" opacity="1" stroke-linejoin="round"/>
<polyline points="254.5,405.7 264.0,403.8" fill="none" stroke="#d04830" stroke-width="0.8" opacity="1" stroke-linejoin="round"/>
<polyline points="323.8,410.0 336.0,411.0" fill="none" stroke="#d04830" stroke-width="0.8" opacity="1" stroke-linejoin="round"/>
<polyline points="499.8,102.9 498.6,107.1 497.2,112.6 495.4,119.1 493.4,126.5 491.2,134.4 488.9,142.8 486.4,151.4 483.8,160.0 481.1,169.0 478.1,178.9 475.0,189.2 471.7,199.8 468.3,210.5 464.9,220.9 461.5,230.8 458.1,240.0 454.7,248.6 451.2,257.0 447.7,265.1 444.1,272.9 440.6,280.3 437.2,287.3 433.8,293.9 430.6,300.0 427.5,305.6 424.6,310.7 421.7,315.3 418.9,319.6 416.1,323.6 413.5,327.3 410.9,330.8 408.3,334.3 405.8,337.6 403.4,340.6 401.0,343.4 398.7,346.0 396.5,348.4 394.3,350.7 392.1,352.8 390.0,354.9 388.0,356.9 386.2,358.6 384.5,360.3 382.9,361.8 381.1,363.2 379.3,364.5 377.2,365.8 374.9,367.1" fill="none" stroke="#c05a1c" stroke-width="1.0" opacity="1" stroke-linejoin="round"/>
<polyline points="374.9,367.1 372.3,368.3 369.5,369.5 366.4,370.7 363.3,371.7 360.0,372.7 356.7,373.6 353.4,374.5 350.0,375.2 346.8,375.9 343.6,376.5 340.5,377.0 337.4,377.4 334.0,377.8 330.2,378.0 326.1,378.1 321.4,378.0 316.0,377.8 310.0,377.4 303.5,376.9 296.7,376.3 289.8,375.6 282.9,374.8 276.3,373.9 270.0,373.0 263.9,372.0 257.8,370.8 251.7,369.6 245.7,368.3 240.0,367.0 234.6,365.7 229.5,364.4 225.0,363.3 220.9,362.2 217.1,361.2 213.6,360.1 210.5,359.1 207.8,358.2 205.4,357.4 203.3,356.7 201.7,356.2" fill="none" stroke="#a88080" stroke-width="1.0" opacity="1" stroke-linejoin="round"/>
<polyline points="374.9,367.3 372.3,368.5 369.5,369.7 366.4,370.9 363.3,371.9 360.0,372.9 356.7,373.8 353.4,374.7 350.0,375.4 346.8,376.1 343.6,376.7 340.5,377.2 337.4,377.6 334.0,378.0 330.2,378.2 326.1,378.3 321.4,378.2 316.0,378.0 310.0,377.6 303.5,377.1 296.7,376.5 289.8,375.8 282.9,375.0 276.3,374.1 270.0,373.2 263.9,372.2 257.8,371.0 251.7,369.8 245.7,368.5 240.0,367.2 234.6,365.9 229.5,364.6 225.0,363.5 220.9,362.4 217.1,361.4 213.6,360.3 210.5,359.3 207.8,358.4 205.4,357.6 203.3,356.9 201.7,356.4" fill="none" stroke="#d8ccd4" stroke-width="0.7" opacity="1" stroke-linejoin="round"/>
<polyline points="511.2,111.0 510.2,114.6 509.1,119.1 507.7,124.4 506.1,130.5 504.3,137.2 502.2,144.4 500.0,152.1 497.5,160.0 494.7,168.7 491.6,178.3 488.3,188.6 484.7,199.3 481.1,210.1 477.3,220.7 473.6,230.7 469.9,240.0 466.2,248.6 462.5,257.0 458.6,265.0 454.8,272.7 450.9,280.1 447.1,287.1 443.3,293.8 439.7,300.0 436.2,305.8 432.6,311.2 429.2,316.2 425.8,320.8 422.4,325.2 419.2,329.2 416.0,333.0 412.9,336.6 409.9,339.9 406.9,342.8 404.0,345.5 401.2,347.9 398.5,350.1 395.9,352.1 393.4,354.1 391.0,356.0 388.9,357.8 387.0,359.3 385.4,360.7 383.8,362.0 382.1,363.2 380.4,364.5 378.4,365.9 376.0,367.5" fill="none" stroke="#c8b8c0" stroke-width="0.75" opacity="1" stroke-linejoin="round"/>
<polyline points="376.0,367.5 373.3,369.3 370.4,371.3 367.3,373.4 364.1,375.6 360.7,377.7 357.2,379.8 353.6,381.6 350.0,383.3 346.3,384.8 342.4,386.1 338.5,387.3 334.4,388.4 330.3,389.4 326.2,390.3 322.1,391.1 318.0,391.7 313.9,392.2 309.8,392.5 305.7,392.7 301.6,392.8 297.4,392.8 293.3,392.7 289.1,392.6 285.0,392.4 280.8,392.2 276.5,391.9 272.2,391.5 268.0,391.1 263.7,390.6 259.6,390.1 255.5,389.5 251.7,389.0 248.2,388.5 245.0,388.0 242.0,387.4 239.1,386.9 236.0,386.2 232.8,385.5 229.2,384.7 225.0,383.8 220.0,382.6 214.0,381.2 207.6,379.7 200.9,378.0 194.5,376.4 188.7,375.0 183.8,373.8 180.2,372.9" fill="none" stroke="#c05a1c" stroke-width="0.9" opacity="1" stroke-linejoin="round"/>
<polyline points="515.0,113.3 514.2,116.7 513.1,120.9 512.0,125.9 510.6,131.7 509.0,138.0 507.2,144.9 505.2,152.2 502.9,160.0 500.3,168.5 497.4,178.1 494.2,188.4 490.9,199.2 487.4,210.0 483.9,220.6 480.4,230.7 477.1,240.0 473.9,248.5 470.7,256.7 467.4,264.4 464.2,271.9 461.0,279.2 457.7,286.2 454.4,293.2 451.0,300.0 447.5,306.8 443.9,313.6 440.3,320.2 436.6,326.7 432.9,332.9 429.3,338.7 425.9,344.1 422.6,349.0 419.5,353.3 416.4,357.1 413.5,360.5 410.7,363.5 407.9,366.2 405.2,368.8 402.6,371.3 400.0,373.8 397.6,376.2 395.4,378.4 393.3,380.4 391.2,382.2 389.1,384.0 386.9,385.8 384.3,387.6 381.4,389.5 378.1,391.5 374.5,393.6 370.6,395.7 366.6,397.7 362.5,399.7 358.3,401.6 354.1,403.3 350.0,404.8 345.9,406.1 341.8,407.2 337.7,408.2 333.5,409.1 329.4,409.8 325.2,410.3 321.1,410.7 317.0,411.0 312.9,411.0 308.8,410.8 304.6,410.5 300.5,410.0 296.4,409.4 292.5,408.7 288.7,408.1 285.0,407.6 281.6,407.1 278.5,406.7 275.6,406.3 272.7,405.9 269.8,405.4 266.8,404.8 263.6,404.1 260.0,403.3 256.1,402.3 252.0,401.2 247.6,400.0 243.2,398.7 238.6,397.4 234.0,396.1 229.5,394.8 225.0,393.5 220.3,392.2 215.3,390.8 210.1,389.4 205.0,388.0 200.1,386.7 195.7,385.5 192.1,384.5 189.3,383.8" fill="none" stroke="#c05a1c" stroke-width="0.8" opacity="1" stroke-linejoin="round"/>
<polyline points="534.8,113.8 533.9,117.1 532.8,121.3 531.4,126.3 529.9,131.9 528.2,138.2 526.3,145.0 524.2,152.3 521.9,160.0 519.3,168.6 516.4,178.3 513.3,188.8 510.0,199.8 506.6,210.7 503.3,221.3 500.1,231.2 497.1,240.0 494.3,247.7 491.7,254.7 489.2,261.0 486.7,267.0 484.3,272.7 481.7,278.4 479.0,284.1 476.2,290.0 473.2,296.2 470.0,302.4 466.7,308.7 463.3,315.0 459.9,321.0 456.5,326.9 453.2,332.5 450.0,337.7 446.9,342.5 443.9,347.1 441.0,351.3 438.0,355.3 435.1,359.2 432.1,362.9 428.9,366.5 425.7,370.0 422.4,373.4 419.2,376.7 415.9,379.9 412.6,382.9 409.1,385.8 405.3,388.6 401.2,391.3 396.7,393.8 391.6,396.2 385.9,398.6 379.9,400.9 373.6,403.0 367.3,404.9 361.1,406.7 355.3,408.2 350.0,409.5 345.2,410.5 340.8,411.1 336.6,411.6 332.6,411.8 328.7,411.9 324.9,412.0 321.0,412.0 317.0,412.0" fill="none" stroke="#f04878" stroke-width="1.0" opacity="1" stroke-linejoin="round"/>
<polyline points="317.0,412.0 312.9,412.0 308.8,411.9 304.6,411.8 300.5,411.6 296.4,411.3 292.5,411.1 288.7,410.8 285.0,410.5 281.6,410.2 278.5,410.0 275.6,409.7 272.7,409.4 269.8,409.0 266.8,408.6 263.6,408.1 260.0,407.5 256.1,406.8 252.0,405.9 247.6,405.0 243.2,404.0 238.6,403.0 234.0,401.9 229.5,400.9 225.0,400.0 220.3,399.1 215.3,398.1 210.1,397.1 205.0,396.2 200.1,395.3 195.7,394.5 192.1,393.8 189.3,393.3" fill="none" stroke="#c05018" stroke-width="0.9" opacity="1" stroke-linejoin="round"/>
<polyline points="538.4,122.5 537.5,125.5 536.4,129.4 535.0,134.1 533.4,139.3 531.8,144.8 530.1,150.4 528.5,155.9 527.0,161.1 525.6,166.0 524.2,171.0 522.8,176.0 521.3,181.0 519.9,186.0 518.5,191.1 517.0,196.1 515.5,201.1 514.0,206.0 512.6,210.9 511.1,215.7 509.7,220.5 508.1,225.4 506.4,230.4 504.6,235.6 502.6,241.1 500.3,246.9 497.9,253.1 495.2,259.4 492.5,265.9 489.6,272.4 486.8,278.9 484.0,285.1 481.3,291.1 478.7,296.9 476.1,302.5 473.6,308.0 471.1,313.4 468.5,318.7 465.9,323.9 463.1,329.1 460.3,334.1 457.4,339.0 454.5,343.8 451.5,348.5 448.5,353.1 445.3,357.7 441.9,362.2 438.4,366.6 434.6,371.1 430.5,375.7 426.1,380.3 421.5,385.0 416.7,389.7 411.8,394.1 407.0,398.3 402.1,402.1 397.4,405.4 392.8,408.2 388.3,410.7 383.7,412.7 379.2,414.5 374.6,416.1 370.0,417.4 365.2,418.6 360.3,419.7 355.3,420.7 350.3,421.5 345.2,422.1 340.0,422.6 334.7,422.8 329.2,422.9 323.4,422.8 317.3,422.5 310.7,421.9 303.5,421.0 296.0,419.9 288.3,418.6 280.7,417.2 273.3,415.8 266.5,414.4 260.3,413.1 254.9,411.9 250.0,410.6 245.6,409.4 241.5,408.1 237.5,406.9 233.6,405.7 229.6,404.5 225.3,403.3 220.6,402.1 215.6,400.9 210.4,399.7 205.3,398.5 200.4,397.4 196.0,396.4 192.4,395.5 189.6,394.9" fill="none" stroke="#9830c0" stroke-width="0.8" opacity="1" stroke-linejoin="round"/>
<polyline points="538.1,121.4 537.2,124.4 536.1,128.3 534.7,133.0 533.1,138.2 531.5,143.7 529.8,149.3 528.2,154.8 526.7,160.0 525.3,164.9 523.9,169.9 522.5,174.9 521.0,179.9 519.6,184.9 518.2,190.0 516.7,195.0 515.2,200.0 513.7,204.9 512.3,209.8 510.8,214.6 509.4,219.4 507.8,224.3 506.1,229.3 504.3,234.5 502.3,240.0 500.0,245.8 497.6,252.0 494.9,258.3 492.2,264.8 489.3,271.3 486.5,277.8 483.7,284.0 481.0,290.0 478.4,295.8 475.8,301.4 473.3,306.9 470.8,312.3 468.2,317.6 465.6,322.8 462.8,328.0 460.0,333.0 457.1,337.9 454.2,342.7 451.2,347.4 448.2,352.0 445.0,356.6 441.6,361.1 438.1,365.5 434.3,370.0 430.2,374.6 425.8,379.2 421.2,383.9 416.4,388.6 411.5,393.0 406.7,397.2 401.8,401.0 397.1,404.3 392.5,407.1 388.0,409.6 383.4,411.6 378.9,413.4 374.3,415.0 369.7,416.3 364.9,417.5 360.0,418.6 355.0,419.6 350.0,420.4 344.9,421.0 339.7,421.5 334.4,421.7 328.9,421.8 323.1,421.7 317.0,421.4 310.4,420.8 303.2,419.9 295.7,418.8 288.0,417.5 280.4,416.1 273.0,414.7 266.2,413.3 260.0,412.0 254.6,410.8 249.7,409.5 245.3,408.3 241.2,407.0 237.2,405.8 233.3,404.6 229.3,403.4 225.0,402.2 220.3,401.0 215.3,399.8 210.1,398.6 205.0,397.4 200.1,396.3 195.7,395.3 192.1,394.4 189.3,393.8" fill="none" stroke="#20f020" stroke-width="1.0" opacity="1" stroke-linejoin="round"/>
<polyline points="561.9,129.5 561.3,131.8 560.6,134.8 559.7,138.3 558.7,142.2 557.7,146.5 556.6,151.0 555.4,155.5 554.3,160.0 553.3,164.3 552.3,168.4 551.4,172.5 550.4,176.9 549.3,181.7 547.9,187.0 546.2,193.0 544.2,200.0 541.7,208.2 538.9,217.7 535.7,228.1 532.3,238.9 528.8,249.9 525.2,260.6 521.7,270.8 518.3,280.0 515.0,288.4 511.6,296.3 508.2,303.8 504.8,311.0 501.4,317.9 498.0,324.6 494.7,331.1 491.4,337.6 488.3,343.9 485.5,349.8 482.8,355.5 480.0,361.0 477.1,366.5 473.9,371.9 470.2,377.4 466.0,383.0 461.0,388.9 455.5,395.2 449.4,401.6 443.1,407.9 436.6,414.0 430.1,419.7 423.9,424.8 418.0,429.0 412.4,432.4 406.8,435.1 401.4,437.2 396.0,438.8 390.7,440.2 385.6,441.3 380.6,442.3 375.7,443.3 371.1,444.3 367.0,445.0 363.0,445.6 359.1,446.0 355.2,446.3 351.0,446.4 346.5,446.3 341.4,446.2 335.6,445.9 329.3,445.4 322.4,444.7 315.4,443.9 308.5,443.0 301.7,442.1 295.5,441.2 290.0,440.4 285.2,439.6 281.0,438.8 277.2,438.0 273.7,437.2 270.3,436.4 267.0,435.6 263.6,434.7 260.0,433.8 256.2,432.9 252.3,431.9 248.5,430.9 244.6,429.9 240.8,428.9 237.0,427.9 233.4,427.0 230.0,426.0 226.6,425.0 223.2,424.0 219.7,422.9 216.5,421.9 213.4,420.9 210.7,420.1 208.5,419.4 206.7,418.8" fill="none" stroke="#c05a1c" stroke-width="0.9" opacity="1" stroke-linejoin="round"/>
<polyline points="423.9,424.8 418.0,429.0 412.4,432.4 406.8,435.1 401.4,437.2 396.0,438.8 390.7,440.2 385.6,441.3 380.6,442.3 375.7,443.3 371.1,444.3 367.0,445.0 363.0,445.6 359.1,446.0 355.2,446.3 351.0,446.4 346.5,446.3 341.4,446.2 335.6,445.9 329.3,445.4 322.4,444.7 315.4,443.9 308.5,443.0 301.7,442.1 295.5,441.2 290.0,440.4 285.2,439.6 281.0,438.8 277.2,438.0 273.7,437.2 270.3,436.4 267.0,435.6 263.6,434.7 260.0,433.8 256.2,432.9 252.3,431.9 248.5,430.9 244.6,429.9 240.8,428.9 237.0,427.9 233.4,427.0 230.0,426.0 226.6,425.0 223.2,424.0 219.7,422.9 216.5,421.9 213.4,420.9 210.7,420.1 208.5,419.4 206.7,418.8" fill="none" stroke="#d8c8c8" stroke-width="0.9" opacity="1" stroke-linejoin="round"/>
<polyline points="570.5,122.4 569.8,125.3 568.8,129.1 567.7,133.6 566.4,138.7 565.1,144.1 563.7,149.6 562.3,154.9 561.0,160.0 559.8,164.6 558.8,168.9 557.7,173.1 556.7,177.3 555.5,182.0 554.1,187.1 552.4,193.1 550.3,200.0 547.8,208.3 544.9,217.8 541.8,228.2 538.4,239.1 534.9,250.1 531.3,260.8 527.8,270.9 524.4,280.0 521.0,288.2 517.5,295.8 514.0,303.0 510.5,309.8 507.0,316.4 503.6,322.7 500.3,328.8 497.1,334.8 494.1,340.6 491.4,346.2 488.8,351.5 486.2,356.7 483.7,361.6 481.0,366.4 478.2,371.1 475.2,375.7 472.0,380.2 468.5,384.6 465.0,388.9 461.4,393.0 457.7,397.0 454.0,400.9 450.3,404.6 446.7,408.1 443.2,411.5 439.9,414.6 436.6,417.6 433.3,420.5 429.8,423.2 426.2,425.9 422.3,428.5 418.1,431.0 413.4,433.5 408.4,436.1 403.0,438.5 397.5,440.9 391.9,443.1 386.3,445.1 380.9,446.9 375.7,448.4 370.8,449.6 366.2,450.6 361.7,451.3 357.2,451.8 352.7,452.2 348.0,452.4 343.2,452.5 338.0,452.4 332.4,452.1 326.3,451.6 320.0,451.0 313.5,450.1 307.1,449.2 301.0,448.3 295.2,447.5 290.0,446.7 285.4,446.0 281.2,445.4 277.4,444.8 273.9,444.1 270.5,443.5 267.1,442.8 263.6,442.1 260.0,441.4 256.3,440.6 252.5,439.8 248.8,439.0 245.1,438.2 241.4,437.3 237.6,436.4 233.8,435.5 230.0,434.5 225.9,433.4 221.5,432.2 216.9,430.9 212.4,429.6 208.1,428.3 204.3,427.2 201.0,426.2 198.6,425.5" fill="none" stroke="#c05a1c" stroke-width="1.1" opacity="1" stroke-linejoin="round"/>
<polyline points="571.0,122.4 570.3,125.3 569.3,129.1 568.2,133.6 566.9,138.7 565.6,144.1 564.2,149.6 562.8,154.9 561.5,160.0 560.3,164.6 559.3,168.9 558.2,173.1 557.2,177.3 556.0,182.0 554.6,187.1 552.9,193.1 550.8,200.0 548.3,208.3 545.4,217.8 542.3,228.2 538.9,239.1 535.4,250.1 531.8,260.8 528.3,270.9 524.9,280.0 521.5,288.2 518.0,295.8 514.5,303.0 511.0,309.8 507.5,316.4 504.1,322.7 500.8,328.8 497.6,334.8 494.6,340.6 491.9,346.2 489.3,351.5 486.7,356.7 484.2,361.6 481.5,366.4 478.7,371.1" fill="none" stroke="#d8c8c8" stroke-width="0.6" opacity="1" stroke-linejoin="round"/>
<polyline points="499.8,102.9 516.4,89.0" fill="none" stroke="#c05a1c" stroke-width="1.0" opacity="1" stroke-linejoin="round"/>
<polyline points="516.4,89.0 511.2,111.0" fill="none" stroke="#d8c8c8" stroke-width="0.9" opacity="1" stroke-linejoin="round"/>
<polyline points="499.8,102.9 511.2,111.0 515.0,113.3" fill="none" stroke="#c05a1c" stroke-width="1.0" opacity="1" stroke-linejoin="round"/>
<polyline points="515.0,113.3 534.8,113.8" fill="none" stroke="#f04878" stroke-width="1.0" opacity="1" stroke-linejoin="round"/>
<polyline points="534.8,113.8 538.1,121.4" fill="none" stroke="#20f020" stroke-width="1.0" opacity="1" stroke-linejoin="round"/>
<polyline points="538.1,121.4 561.9,129.5 570.5,122.4" fill="none" stroke="#c05a1c" stroke-width="1.0" opacity="1" stroke-linejoin="round"/>
<polyline points="201.7,356.2 180.2,372.9 182.6,390.5 189.3,383.8" fill="none" stroke="#c05a1c" stroke-width="1.0" opacity="1" stroke-linejoin="round"/>
<polyline points="189.3,383.8 189.3,393.5" fill="none" stroke="#80a020" stroke-width="0.9" opacity="1" stroke-linejoin="round"/>
<polyline points="182.6,390.5 189.3,393.5 198.6,425.5 206.7,418.8" fill="none" stroke="#c05a1c" stroke-width="1.0" opacity="1" stroke-linejoin="round"/>
</g>
<g>
<text x="337.1" y="221.5" font-size="13.5" fill="#ffffff" stroke="#ffffff" stroke-width="0.25" textLength="122" lengthAdjust="spacingAndGlyphs">stem_bearding_face</text>
<line x1="395.4" y1="225.3" x2="475.7" y2="262.6" stroke="#e8e8f8" stroke-width="1"/>
<text x="568.2" y="295.1" font-size="13.5" fill="#ffffff" stroke="#ffffff" stroke-width="0.25" textLength="63" lengthAdjust="spacingAndGlyphs">stem_front</text>
<line x1="519.7" y1="286" x2="561" y2="296.4" stroke="#e8e8f8" stroke-width="1"/>
<text x="532.2" y="343.3" font-size="13.5" fill="#ffffff" stroke="#ffffff" stroke-width="0.25" textLength="79.3" lengthAdjust="spacingAndGlyphs">stem_outside</text>
<line x1="481" y1="334.2" x2="526.7" y2="344.3" stroke="#e8e8f8" stroke-width="1"/>
<text x="213.9" y="330.8" font-size="13.5" fill="#ffffff" stroke="#ffffff" stroke-width="0.25" textLength="65.3" lengthAdjust="spacingAndGlyphs">stem_back</text>
<line x1="230.9" y1="335.7" x2="258.6" y2="377.7" stroke="#e8e8f8" stroke-width="1"/>
<text x="323.90000000000003" y="317.9" font-size="13.5" fill="#ffffff" stroke="#ffffff" stroke-width="0.25" textLength="72.2" lengthAdjust="spacingAndGlyphs">stem_inside</text>
<line x1="348.6" y1="321.4" x2="380.6" y2="377.7" stroke="#e8e8f8" stroke-width="1"/>
<text x="453.8" y="441.5" font-size="13.5" fill="#ffffff" stroke="#ffffff" stroke-width="0.25" textLength="107.2" lengthAdjust="spacingAndGlyphs">stem_rabbet_face</text>
<line x1="365.2" y1="414.3" x2="449" y2="440" stroke="#e8e8f8" stroke-width="1"/>
</g>
</svg>
</body></html>
